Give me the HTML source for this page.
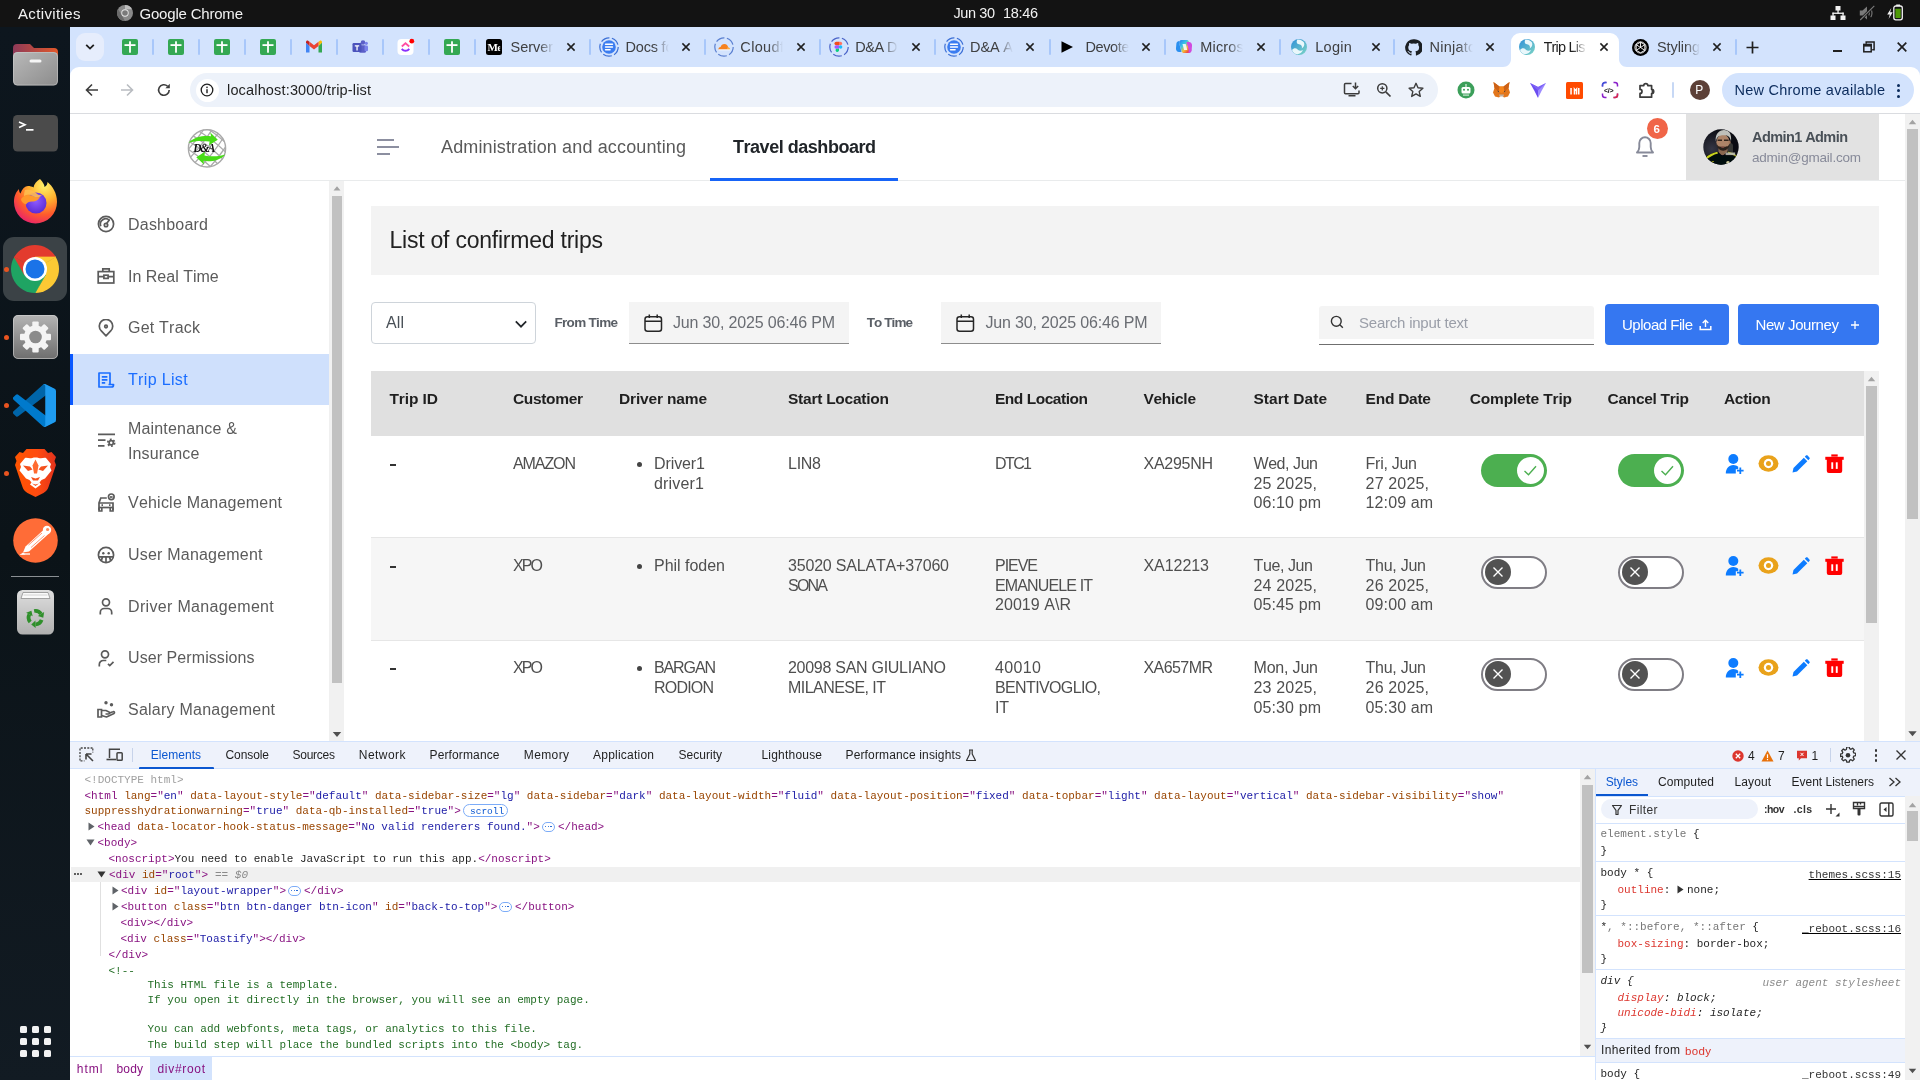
<!DOCTYPE html>
<html lang="en">
<head>
<meta charset="utf-8">
<title>Trip List</title>
<style>
html,body{margin:0;padding:0;}
body{width:1920px;height:1080px;overflow:hidden;position:relative;background:#fff;font-family:"Liberation Sans",sans-serif;font-kerning:none;-webkit-font-smoothing:antialiased;}
.b{position:absolute;display:block;}
.t{position:absolute;white-space:pre;line-height:1;display:block;}
.t span{white-space:pre;}
.u{text-decoration:underline;}
#w{position:absolute;left:0;top:0;width:1920px;height:1080px;will-change:transform;}
</style>
</head>
<body>
<div id="w">
<div class="b" style="left:0px;top:0px;width:1920px;height:27px;background:#131313;"></div>
<span class="t" style="left:18px;top:6px;font-size:15px;color:#f2f2f2;letter-spacing:0.369px;">Activities</span>
<svg class="b" style="left:117px;top:5px;" width="16" height="16" viewBox="0 0 16 16"><circle cx="8" cy="8" r="8" fill="#8a8a8a"/><path d="M8 0a8 8 0 0 1 7 4.2H8z" fill="#bdbdbd"/><path d="M1 4.1 4.6 10 8 16a8 8 0 0 1-7-11.9z" fill="#6a6a6a"/><circle cx="8" cy="8" r="3.7" fill="#e8e8e8"/><circle cx="8" cy="8" r="2.8" fill="#7a7a7a"/></svg>
<span class="t" style="left:139.5px;top:6px;font-size:15px;color:#f2f2f2;letter-spacing:-0.199px;">Google Chrome</span>
<span class="t" style="left:953.5px;top:6px;font-size:14.5px;color:#f2f2f2;letter-spacing:-0.407px;">Jun 30</span>
<span class="t" style="left:1003px;top:6px;font-size:14.5px;color:#f2f2f2;letter-spacing:-0.321px;">18:46</span>
<svg class="b" style="left:1830px;top:5px;" width="16" height="16" viewBox="0 0 16 16"><g fill="#f2f2f2"><rect x="5.5" y="1" width="5" height="4.5"/><rect x="0.5" y="10.5" width="5" height="4.5"/><rect x="10.5" y="10.5" width="5" height="4.5"/><rect x="7.4" y="5" width="1.3" height="3.5"/><rect x="2.4" y="7.6" width="11.3" height="1.3"/><rect x="2.4" y="7.6" width="1.3" height="3.2"/><rect x="12.4" y="7.6" width="1.3" height="3.2"/></g></svg>
<svg class="b" style="left:1859px;top:5px;" width="16" height="16" viewBox="0 0 16 16"><g fill="#7a7a7a"><path d="M.8 5.5h2.7L8 1.5v13L3.5 10.5H.8z"/><path d="M10 5.2c1.2.8 1.2 4.8 0 5.6l-.7-.8c.7-.7.7-3.3 0-4z"/><path d="M12 3.5c2 1.8 2 7.2 0 9l-.7-.7c1.5-1.7 1.5-5.9 0-7.6z"/></g><path d="M15.3 .8 1.2 15" stroke="#131313" stroke-width="2.6"/><path d="M15.3 .8 1.2 15" stroke="#7a7a7a" stroke-width="1.1"/></svg>
<svg class="b" style="left:1886px;top:4px;" width="18" height="18" viewBox="0 0 18 18"><path d="M5.3 4 1.2 10.6h2.6L2.6 15 6.7 8.3H4.1z" fill="#f2f2f2"/><rect x="7.8" y="2" width="8.5" height="13.8" rx="2" fill="none" stroke="#f2f2f2" stroke-width="1.3"/><rect x="10.2" y=".5" width="3.8" height="1.6" fill="#f2f2f2"/><rect x="9.4" y="4.8" width="5.3" height="9.2" rx=".5" fill="#4e9a06"/></svg>
<div class="b" style="left:0px;top:27px;width:70px;height:1053px;background:linear-gradient(180deg,#0d161e 0%,#0b1318 50%,#121b23 100%);"></div>
<svg class="b" style="left:13px;top:44px;" width="45" height="42" viewBox="0 0 45 42"><defs><linearGradient id="fg1" x1="0" x2="1"><stop offset="0" stop-color="#8e3a59"/><stop offset="1" stop-color="#e2582a"/></linearGradient><linearGradient id="fg2" x1="0" y1="0" x2="1" y2="1"><stop offset="0" stop-color="#b9b9b9"/><stop offset="1" stop-color="#8c8c8c"/></linearGradient></defs><path d="M0 4a4 4 0 0 1 4-4h13l4 4h20a4 4 0 0 1 4 4v20H0z" fill="url(#fg1)"/><rect x="0" y="8" width="45" height="33.5" rx="4.5" fill="url(#fg2)"/><rect x="0.5" y="8.5" width="44" height="32.5" rx="4" fill="none" stroke="#d0d0d0" stroke-width="0.7" opacity="0.7"/><rect x="16.5" y="15.5" width="12" height="3" rx="1.5" fill="#f5f5f5"/></svg>
<svg class="b" style="left:13px;top:115px;" width="45" height="37" viewBox="0 0 45 37"><rect width="45" height="36.5" rx="4.5" fill="#4b4b4b"/><path d="M6 7l6 2.7L6 12.4" fill="none" stroke="#fff" stroke-width="1.6"/><rect x="13" y="14" width="7.5" height="1.7" fill="#fff"/></svg>
<svg class="b" style="left:13px;top:178px;" width="45" height="46" viewBox="0 0 45 46"><defs><radialGradient id="ff1" cx="0.7" cy="0.15" r="1"><stop offset="0" stop-color="#fff36b"/><stop offset="0.35" stop-color="#ffb02e"/><stop offset="0.65" stop-color="#ff5b2c"/><stop offset="1" stop-color="#e3127e"/></radialGradient><radialGradient id="ff2" cx="0.5" cy="0.4" r="0.6"><stop offset="0" stop-color="#8f5bff"/><stop offset="1" stop-color="#5b2bd6"/></radialGradient></defs><path d="M27 1c3 3 4.5 6 4.5 8 2-1 3-3 3-5 5 4 9.5 11 9.5 20a21.5 21.5 0 0 1-43 0c0-6 2-10 5-13 0 2 .5 3.5 1.5 4.5C9 11 12 8 15 8c2 0 4 .5 5.5 1.5C21 6 23.5 3 27 1z" fill="url(#ff1)"/><circle cx="23" cy="25" r="10.5" fill="url(#ff2)"/><path d="M8 21c3-4 8-5 12-3 3 1.5 5 1.5 7 .5-1 3-4 5-8 5-3 0-5 1-6 3-3-1-5-3-5-5.5z" fill="#ff9a2b"/><path d="M12 12c4-1 8 0 11 3 2 2 4 2.5 6 2-2 2.5-6 3-9 1-3-2-6-2-9 0 0-2.5.5-4.5 1-6z" fill="#ffbd4f" opacity="0.9"/></svg>
<div class="b" style="left:3px;top:237px;width:64px;height:64px;background:#3b4246;border-radius:11px;"></div>
<svg class="b" style="left:11px;top:245px;" width="48" height="48" viewBox="0 0 48 48"><path d="M24 24 3.22 12A24 24 0 0 1 44.78 12z" fill="#e33b2e"/><path d="M24 24 44.78 12A24 24 0 0 1 24 48z" fill="#fcc934"/><path d="M24 24 24 48A24 24 0 0 1 3.22 12z" fill="#1fa463"/><path d="M24 24 44.78 12H24z" fill="#fcc934" stroke="#fcc934" stroke-width=".7"/><path d="M24 24 24 48 34.39 30z" fill="#1fa463" stroke="#1fa463" stroke-width=".7"/><path d="M24 24 3.22 12 13.61 30z" fill="#e33b2e" stroke="#e33b2e" stroke-width=".7"/><circle cx="24" cy="24" r="12" fill="#fff"/><circle cx="24" cy="24" r="9.5" fill="#1a73e8"/></svg>
<svg class="b" style="left:13px;top:315px;" width="45" height="45" viewBox="0 0 45 45"><defs><linearGradient id="sg" x1="0" y1="0" x2="0" y2="1"><stop offset="0" stop-color="#b4b4b4"/><stop offset="1" stop-color="#6e6e6e"/></linearGradient></defs><rect width="45" height="44" rx="5" fill="url(#sg)"/><rect x="0.5" y="0.5" width="44" height="43" rx="4.5" fill="none" stroke="#d8d8d8" stroke-width="0.8" opacity="0.7"/><g transform="translate(22.5 22)"><g fill="#f4f4f4"><rect x="-3.2" y="-15.5" width="6.4" height="8" rx="1" transform="rotate(0)"/><rect x="-3.2" y="-15.5" width="6.4" height="8" rx="1" transform="rotate(45)"/><rect x="-3.2" y="-15.5" width="6.4" height="8" rx="1" transform="rotate(90)"/><rect x="-3.2" y="-15.5" width="6.4" height="8" rx="1" transform="rotate(135)"/><rect x="-3.2" y="-15.5" width="6.4" height="8" rx="1" transform="rotate(180)"/><rect x="-3.2" y="-15.5" width="6.4" height="8" rx="1" transform="rotate(225)"/><rect x="-3.2" y="-15.5" width="6.4" height="8" rx="1" transform="rotate(270)"/><rect x="-3.2" y="-15.5" width="6.4" height="8" rx="1" transform="rotate(315)"/></g><circle r="11.5" fill="#f4f4f4"/><circle r="6.3" fill="#8b8b8b"/></g></svg>
<svg class="b" style="left:13px;top:384px;" width="43" height="43" viewBox="0 0 100 100"><path d="M96.46 10.8 75.86.88a6.23 6.23 0 0 0-7.1 1.2L1.3 63.6a4.17 4.17 0 0 0 0 6.16l5.5 5a4.17 4.17 0 0 0 5.33.24L93.4 13.4c2.72-2.07 6.64-.13 6.64 3.3v-.24a6.25 6.25 0 0 0-3.54-5.63z" fill="#0065a9"/><path d="M96.46 89.2 75.86 99.12a6.23 6.23 0 0 1-7.1-1.2L1.3 36.4a4.17 4.17 0 0 1 0-6.16l5.5-5a4.17 4.17 0 0 1 5.33-.24L93.4 86.6c2.72 2.07 6.64.13 6.64-3.3v.24a6.25 6.25 0 0 1-3.54 5.63z" fill="#007acc"/><path d="M75.86 99.13a6.23 6.23 0 0 1-7.1-1.21c2.3 2.3 6.25.67 6.25-2.59V4.67c0-3.26-3.94-4.89-6.25-2.59a6.23 6.23 0 0 1 7.1-1.21l20.6 9.9A6.25 6.25 0 0 1 100 16.4v67.2a6.25 6.25 0 0 1-3.54 5.63z" fill="#1f9cf0"/></svg>
<svg class="b" style="left:14px;top:449px;" width="43" height="48" viewBox="0 0 43 48"><defs><linearGradient id="bg" x1="0" x2="1"><stop offset="0" stop-color="#ff5500"/><stop offset="0.55" stop-color="#ff4b10"/><stop offset="1" stop-color="#e2321c"/></linearGradient></defs><path d="M30.5 0h-18L9 4 5.5 3 1 8l1.5 4L1 16l7.5 22c1 3 2.5 4.5 5 6l8 4 8-4c2.5-1.5 4-3 5-6L42 16l-1.5-4L42 8l-4.5-5L34 4z" fill="url(#bg)"/><path d="M21.5 8.5c2.5 0 4 .8 5.5.8s3.5-1 5-.3l5 6-1 3 1.5 3.5-6.5 8-3.5 1.5-2 2.5 1.5 2-5.5 4-5.5-4 1.5-2-2-2.5-3.5-1.5-6.5-8 1.5-3.5-1-3 5-6c1.5-.7 3.5.3 5 .3s3-.8 5.5-.8z" fill="#fff"/><path d="M9 16.5l7 1 2.5 3-4.5 1.5zM34 16.5l-7 1-2.5 3 4.5 1.5z" fill="#f4511e"/><path d="M21.5 10.5l3 6-1.5 8h-3l-1.5-8z" fill="#ff5a1a" opacity="0.9"/><path d="M17 28l4.5 1.5L26 28l-2 3.5h-5z" fill="#f4511e"/><path d="M18 34.5l3.5 1 3.5-1-3.5 2.5z" fill="#f4511e"/></svg>
<svg class="b" style="left:13px;top:518px;" width="45" height="45" viewBox="0 0 45 45"><circle cx="22.5" cy="22.5" r="22.3" fill="#ff6c37"/><path d="M31 11.5 12.5 28.5 10 34.5l6-1L36 15.5z" fill="#fff"/><circle cx="34" cy="12" r="4.2" fill="#fff"/><circle cx="34.6" cy="11.5" r="1.6" fill="#ff8a5c"/><path d="M10 34.5 6.5 37l6-.5z" fill="#fff"/><path d="M9 36h8" stroke="#fff" stroke-width="1.3"/><path d="M15.5 27 29 15M18 29.5 31.5 17.5M21 31l12-11" stroke="#ff6c37" stroke-width="0.7" fill="none"/></svg>
<div class="b" style="left:4px;top:266.5px;width:5px;height:5px;background:#e95420;border-radius:50%;"></div>
<div class="b" style="left:4px;top:334.5px;width:5px;height:5px;background:#e95420;border-radius:50%;"></div>
<div class="b" style="left:4px;top:402.5px;width:5px;height:5px;background:#e95420;border-radius:50%;"></div>
<div class="b" style="left:4px;top:470.5px;width:5px;height:5px;background:#e95420;border-radius:50%;"></div>
<div class="b" style="left:11px;top:576px;width:48px;height:1px;background:#8a8f93;"></div>
<svg class="b" style="left:17px;top:589px;" width="37" height="46" viewBox="0 0 37 46"><defs><linearGradient id="tg" x1="0" y1="0" x2="0" y2="1"><stop offset="0" stop-color="#dedede"/><stop offset="1" stop-color="#b0b0b0"/></linearGradient></defs><rect x="0" y="1" width="37" height="44.5" rx="5.5" fill="url(#tg)"/><path d="M4 9.5 6 3.5h25l2 6z" fill="#fafafa" stroke="#8f8f8f" stroke-width="0.8"/><path d="M6.5 6h24" stroke="#c9c9c9" stroke-width="0.8"/><g transform="translate(18.3 28.6)"><path d="M-1.16 -6.6A6.7 6.7 0 0 1 5.68 -3.55" fill="none" stroke="#2f8f2b" stroke-width="3.8"/><path d="M8.82 -5.51L2.54 -1.59L7.96 0.1z" fill="#2f8f2b"/><path d="M6.3 2.29A6.7 6.7 0 0 1 0.23 6.7" fill="none" stroke="#2f8f2b" stroke-width="3.8"/><path d="M0.36 10.39L0.1 3L-4.06 6.85z" fill="#2f8f2b"/><path d="M-5.13 4.31A6.7 6.7 0 0 1 -5.92 -3.15" fill="none" stroke="#2f8f2b" stroke-width="3.8"/><path d="M-9.18 -4.88L-2.65 -1.41L-3.9 -6.94z" fill="#2f8f2b"/></g></svg>
<div class="b" style="left:20px;top:1026px;width:6.5px;height:6.5px;background:#f2f2f2;border-radius:1.5px;"></div>
<div class="b" style="left:32px;top:1026px;width:6.5px;height:6.5px;background:#f2f2f2;border-radius:1.5px;"></div>
<div class="b" style="left:44px;top:1026px;width:6.5px;height:6.5px;background:#f2f2f2;border-radius:1.5px;"></div>
<div class="b" style="left:20px;top:1038px;width:6.5px;height:6.5px;background:#f2f2f2;border-radius:1.5px;"></div>
<div class="b" style="left:32px;top:1038px;width:6.5px;height:6.5px;background:#f2f2f2;border-radius:1.5px;"></div>
<div class="b" style="left:44px;top:1038px;width:6.5px;height:6.5px;background:#f2f2f2;border-radius:1.5px;"></div>
<div class="b" style="left:20px;top:1050px;width:6.5px;height:6.5px;background:#f2f2f2;border-radius:1.5px;"></div>
<div class="b" style="left:32px;top:1050px;width:6.5px;height:6.5px;background:#f2f2f2;border-radius:1.5px;"></div>
<div class="b" style="left:44px;top:1050px;width:6.5px;height:6.5px;background:#f2f2f2;border-radius:1.5px;"></div>
<div class="b" style="left:70px;top:27px;width:1850px;height:52px;background:#d3e3fd;"></div>
<div class="b" style="left:76px;top:33px;width:28px;height:28px;background:#e6edfc;border-radius:9px;"></div>
<svg class="b" style="left:83px;top:41px;" width="14" height="12" viewBox="0 0 14 12"><path d="M3.2 3.8 7 7.6l3.8-3.8" fill="none" stroke="#1f1f1f" stroke-width="1.8"/></svg>
<svg class="b" style="left:122px;top:39px;" width="16" height="16" viewBox="0 0 16 16"><rect width="16" height="16" rx="2" fill="#34a853"/><rect x="2.5" y="5.2" width="11" height="1.8" fill="#fff"/><rect x="7.1" y="2.3" width="1.8" height="11.4" fill="#fff"/></svg>
<svg class="b" style="left:168px;top:39px;" width="16" height="16" viewBox="0 0 16 16"><rect width="16" height="16" rx="2" fill="#34a853"/><rect x="2.5" y="5.2" width="11" height="1.8" fill="#fff"/><rect x="7.1" y="2.3" width="1.8" height="11.4" fill="#fff"/></svg>
<svg class="b" style="left:214px;top:39px;" width="16" height="16" viewBox="0 0 16 16"><rect width="16" height="16" rx="2" fill="#34a853"/><rect x="2.5" y="5.2" width="11" height="1.8" fill="#fff"/><rect x="7.1" y="2.3" width="1.8" height="11.4" fill="#fff"/></svg>
<svg class="b" style="left:260px;top:39px;" width="16" height="16" viewBox="0 0 16 16"><rect width="16" height="16" rx="2" fill="#34a853"/><rect x="2.5" y="5.2" width="11" height="1.8" fill="#fff"/><rect x="7.1" y="2.3" width="1.8" height="11.4" fill="#fff"/></svg>
<svg class="b" style="left:306px;top:40px;" width="16" height="14" viewBox="0 0 16 14"><path d="M0 2.5v10h3.5V6z" fill="#4285f4"/><path d="M16 2.5v10h-3.5V6z" fill="#34a853"/><path d="M0 2.5 3.5 6V1.8L2.4.9C1.4.2 0 .9 0 2.1z" fill="#c5221f"/><path d="M16 2.5 12.5 6V1.8l1.1-.9c1-.7 2.4 0 2.4 1.2z" fill="#fbbc04"/><path d="M3.5 6V1.8L8 5.2l4.5-3.4V6L8 9.4z" fill="#ea4335"/></svg>
<svg class="b" style="left:352px;top:39px;" width="16" height="16" viewBox="0 0 16 16"><circle cx="11" cy="3.5" r="2.3" fill="#5b5fc7"/><circle cx="14.3" cy="4.3" r="1.6" fill="#7b83eb"/><rect x="7" y="6.2" width="7" height="7.5" rx="1.5" fill="#5b5fc7"/><rect x="12.5" y="6.5" width="3.5" height="5.8" rx="1.2" fill="#7b83eb"/><rect x="0.5" y="4" width="9" height="9" rx="1.2" fill="#4b53bc"/><path d="M2.8 6.3h4.4v1.2H5.7v4H4.4v-4H2.8z" fill="#fff"/></svg>
<svg class="b" style="left:397px;top:38px;" width="18" height="18" viewBox="0 0 18 18"><rect x="0.5" y="1" width="16" height="16" rx="4" fill="#fff"/><path d="M4 11.5c2.6 3 6.4 3 9 0l-1.5-1.3c-1.8 2-4.2 2-6 0z" fill="#8930fd"/><path d="M8.5 4 4.2 7.8l1.2 1.4L8.5 6.5l3.1 2.7 1.2-1.4z" fill="#ff4fa3"/><circle cx="14.8" cy="3.2" r="2.4" fill="#ff0000"/></svg>
<svg class="b" style="left:444px;top:39px;" width="16" height="16" viewBox="0 0 16 16"><rect width="16" height="16" rx="2" fill="#34a853"/><rect x="2.5" y="5.2" width="11" height="1.8" fill="#fff"/><rect x="7.1" y="2.3" width="1.8" height="11.4" fill="#fff"/></svg>
<div class="b" style="left:152px;top:39px;width:2px;height:16px;background:#a8c7fa;border-radius:1px;"></div>
<div class="b" style="left:198px;top:39px;width:2px;height:16px;background:#a8c7fa;border-radius:1px;"></div>
<div class="b" style="left:244px;top:39px;width:2px;height:16px;background:#a8c7fa;border-radius:1px;"></div>
<div class="b" style="left:290px;top:39px;width:2px;height:16px;background:#a8c7fa;border-radius:1px;"></div>
<div class="b" style="left:336px;top:39px;width:2px;height:16px;background:#a8c7fa;border-radius:1px;"></div>
<div class="b" style="left:382px;top:39px;width:2px;height:16px;background:#a8c7fa;border-radius:1px;"></div>
<div class="b" style="left:428px;top:39px;width:2px;height:16px;background:#a8c7fa;border-radius:1px;"></div>
<div class="b" style="left:474px;top:39px;width:2px;height:16px;background:#a8c7fa;border-radius:1px;"></div>
<svg class="b" style="left:1503px;top:33px;" width="124" height="34" viewBox="0 0 124 34"><path d="M0 34c4.5 0 8-3.5 8-8V9a9 9 0 0 1 9-9h90a9 9 0 0 1 9 9v17c0 4.5 3.5 8 8 8z" fill="#fff"/></svg>
<svg class="b" style="left:486px;top:39px;" width="16" height="16" viewBox="0 0 16 16"><rect width="16" height="16" rx="2.5" fill="#000"/></svg>
<span class="t" style="left:487.5px;top:42px;font-size:11px;color:#fff;font-family:'Liberation Serif',serif;font-weight:700;">M</span>
<span class="t" style="left:497.3px;top:42px;font-size:11px;color:#fff;font-family:'Liberation Serif',serif;font-weight:700;clip-path:inset(0 2px 0 0);">e</span>
<div class="b" style="left:510.5px;top:37px;width:44px;height:20px;overflow:hidden;-webkit-mask-image:linear-gradient(90deg,#000 0,#000 28px,transparent 43px);mask-image:linear-gradient(90deg,#000 0,#000 28px,transparent 43px);"><span class="t" style="left:0px;top:3px;font-size:14.5px;color:#3f4042;letter-spacing:-0.041px;">Server</span>
</div>
<svg class="b" style="left:564.8px;top:41px;" width="12" height="12" viewBox="0 0 12 12"><path d="M2.4 2.4 9.6 9.6M9.6 2.4 2.4 9.6" stroke="#1f1f1f" stroke-width="1.5" fill="none"/></svg>
<svg class="b" style="left:599px;top:37px;" width="20" height="20" viewBox="0 0 20 20"><circle cx="10" cy="10" r="9.2" fill="none" stroke="#3b6fd6" stroke-width="1.2" stroke-dasharray="9 2.5"/><circle cx="10" cy="10" r="6.8" fill="#3b7cf0"/><g fill="#fff"><rect x="5.8" y="6.5" width="8.4" height="1.4" rx=".7"/><rect x="5.8" y="9.3" width="8.4" height="1.4" rx=".7"/><rect x="5.8" y="12.1" width="6" height="1.4" rx=".7"/></g></svg>
<div class="b" style="left:625.5px;top:37px;width:44px;height:20px;overflow:hidden;-webkit-mask-image:linear-gradient(90deg,#000 0,#000 28px,transparent 43px);mask-image:linear-gradient(90deg,#000 0,#000 28px,transparent 43px);"><span class="t" style="left:0px;top:3px;font-size:14.5px;color:#3f4042;letter-spacing:-0.193px;">Docs fo</span>
</div>
<svg class="b" style="left:679.8px;top:41px;" width="12" height="12" viewBox="0 0 12 12"><path d="M2.4 2.4 9.6 9.6M9.6 2.4 2.4 9.6" stroke="#1f1f1f" stroke-width="1.5" fill="none"/></svg>
<svg class="b" style="left:713.8px;top:37px;" width="20" height="20" viewBox="0 0 20 20"><circle cx="10" cy="10" r="9.2" fill="none" stroke="#5a7fd0" stroke-width="1.2" stroke-dasharray="9 2.5"/><path d="M4.5 12.8c-.3-1.6.8-2.7 2.1-2.7.5-1.9 2-3 3.8-3 2.1 0 3.6 1.6 3.8 3.6 1 .1 1.7 1 1.5 2.1z" fill="#f6821f"/><path d="M13.5 10.3c1.6-.2 2.7.9 2.5 2.5h-3.3z" fill="#fbad41"/><rect x="4.5" y="12.4" width="11.5" height=".9" fill="#fff"/></svg>
<div class="b" style="left:740.3px;top:37px;width:44px;height:20px;overflow:hidden;-webkit-mask-image:linear-gradient(90deg,#000 0,#000 28px,transparent 43px);mask-image:linear-gradient(90deg,#000 0,#000 28px,transparent 43px);"><span class="t" style="left:0px;top:3px;font-size:14.5px;color:#3f4042;letter-spacing:0.357px;">Cloudf</span>
</div>
<svg class="b" style="left:794.5999999999999px;top:41px;" width="12" height="12" viewBox="0 0 12 12"><path d="M2.4 2.4 9.6 9.6M9.6 2.4 2.4 9.6" stroke="#1f1f1f" stroke-width="1.5" fill="none"/></svg>
<svg class="b" style="left:828.8px;top:37px;" width="20" height="20" viewBox="0 0 20 20"><circle cx="10" cy="10" r="9.2" fill="none" stroke="#4a63c8" stroke-width="1.2" stroke-dasharray="9 2.5"/><path d="M7.2 4.8h2.8v3.5H7.2a1.75 1.75 0 0 1 0-3.5z" fill="#f24e1e"/><path d="M10 4.8h1.4a1.75 1.75 0 0 1 0 3.5H10z" fill="#ff7262"/><path d="M7.2 8.3h2.8v3.5H7.2a1.75 1.75 0 0 1 0-3.5z" fill="#a259ff"/><circle cx="11.6" cy="10.05" r="1.75" fill="#1abcfe"/><path d="M7.2 11.8h2.8v1.8a1.75 1.75 0 1 1-2.8-1.8z" fill="#0acf83"/></svg>
<div class="b" style="left:855.3px;top:37px;width:44px;height:20px;overflow:hidden;-webkit-mask-image:linear-gradient(90deg,#000 0,#000 28px,transparent 43px);mask-image:linear-gradient(90deg,#000 0,#000 28px,transparent 43px);"><span class="t" style="left:0px;top:3px;font-size:14.5px;color:#3f4042;letter-spacing:-0.529px;">D&amp;A D</span>
</div>
<svg class="b" style="left:909.5999999999999px;top:41px;" width="12" height="12" viewBox="0 0 12 12"><path d="M2.4 2.4 9.6 9.6M9.6 2.4 2.4 9.6" stroke="#1f1f1f" stroke-width="1.5" fill="none"/></svg>
<svg class="b" style="left:943.6px;top:37px;" width="20" height="20" viewBox="0 0 20 20"><circle cx="10" cy="10" r="9.2" fill="none" stroke="#3b6fd6" stroke-width="1.2" stroke-dasharray="9 2.5"/><circle cx="10" cy="10" r="6.8" fill="#3b7cf0"/><g fill="#fff"><rect x="5.8" y="6.5" width="8.4" height="1.4" rx=".7"/><rect x="5.8" y="9.3" width="8.4" height="1.4" rx=".7"/><rect x="5.8" y="12.1" width="6" height="1.4" rx=".7"/></g></svg>
<div class="b" style="left:970.1px;top:37px;width:44px;height:20px;overflow:hidden;-webkit-mask-image:linear-gradient(90deg,#000 0,#000 28px,transparent 43px);mask-image:linear-gradient(90deg,#000 0,#000 28px,transparent 43px);"><span class="t" style="left:0px;top:3px;font-size:14.5px;color:#3f4042;letter-spacing:-0.154px;">D&amp;A A</span>
</div>
<svg class="b" style="left:1024.4px;top:41px;" width="12" height="12" viewBox="0 0 12 12"><path d="M2.4 2.4 9.6 9.6M9.6 2.4 2.4 9.6" stroke="#1f1f1f" stroke-width="1.5" fill="none"/></svg>
<svg class="b" style="left:1057.5px;top:39px;" width="16" height="16" viewBox="0 0 16 16"><path d="M3.5 2.3 15 8 3.5 13.7z" fill="#000"/></svg>
<div class="b" style="left:1085.5px;top:37px;width:44px;height:20px;overflow:hidden;-webkit-mask-image:linear-gradient(90deg,#000 0,#000 28px,transparent 43px);mask-image:linear-gradient(90deg,#000 0,#000 28px,transparent 43px);"><span class="t" style="left:0px;top:3px;font-size:14.5px;color:#3f4042;letter-spacing:-0.389px;">Devote</span>
</div>
<svg class="b" style="left:1139.8px;top:41px;" width="12" height="12" viewBox="0 0 12 12"><path d="M2.4 2.4 9.6 9.6M9.6 2.4 2.4 9.6" stroke="#1f1f1f" stroke-width="1.5" fill="none"/></svg>
<svg class="b" style="left:1175.8px;top:39px;" width="16" height="16" viewBox="0 0 16 16"><defs><linearGradient id="cp1" x1="0" y1="0" x2="1" y2="1"><stop offset="0" stop-color="#2a7bf0"/><stop offset="0.35" stop-color="#37c6e8"/><stop offset="0.6" stop-color="#f5c13a"/><stop offset="0.8" stop-color="#f0543a"/><stop offset="1" stop-color="#c23bd8"/></linearGradient></defs><path d="M5.5 1h5.2c1 0 1.8.6 2.1 1.5l2.4 8c.5 1.7-.7 3.5-2.5 3.5H7.8c-1 0-1.8-.6-2.1-1.5L3.3 4.5C2.8 2.8 3.8 1 5.5 1z" fill="url(#cp1)"/><path d="M3.3 2c-1.5 0-2.7 1.1-2.9 2.5L0 9c-.3 2 1 4 3 4h2.5L3.3 4.5z" fill="#2a8ff0"/><path d="M12.7 14c1.5 0 2.7-1.1 2.9-2.5L16 7c.3-2-1-4-3-4h-2.5l2.2 7.5z" fill="#d14adf"/><path d="M6.5 5h3.2l1.6 6H8.1z" fill="#fff" opacity="0.85"/></svg>
<div class="b" style="left:1200.3px;top:37px;width:44px;height:20px;overflow:hidden;-webkit-mask-image:linear-gradient(90deg,#000 0,#000 28px,transparent 43px);mask-image:linear-gradient(90deg,#000 0,#000 28px,transparent 43px);"><span class="t" style="left:0px;top:3px;font-size:14.5px;color:#3f4042;letter-spacing:0.161px;">Micros</span>
</div>
<svg class="b" style="left:1254.6px;top:41px;" width="12" height="12" viewBox="0 0 12 12"><path d="M2.4 2.4 9.6 9.6M9.6 2.4 2.4 9.6" stroke="#1f1f1f" stroke-width="1.5" fill="none"/></svg>
<svg class="b" style="left:1290.8px;top:39px;" width="16" height="16" viewBox="0 0 16 16"><defs><linearGradient id="tr1298" x1="0" y1="0" x2="1" y2="1"><stop offset="0" stop-color="#2f8fd8"/><stop offset="1" stop-color="#7ed6c5"/></linearGradient></defs><circle cx="8" cy="8" r="8" fill="url(#tr1298)"/><path d="M6.5 0.4c-1.5 2.2-.8 4.3 1.5 4.8 2.5.5 3.5 2.2 2.8 4.2 2-1 3.2-3.2 2.2-5.8-1-2-3.7-3.4-6.5-3.2z" fill="#e9f7fb"/><path d="M1 11c1.6-2 4-2.2 5.6-.6 1.5 1.5 3.3 1.7 5.4.7-1.3 3-4 4.6-7 3.9-2-.6-3.4-2.1-4-4z" fill="#e9f7fb"/></svg>
<span class="t" style="left:1315.3px;top:40px;font-size:14.5px;color:#3f4042;letter-spacing:0.255px;">Login</span>
<svg class="b" style="left:1369.6px;top:41px;" width="12" height="12" viewBox="0 0 12 12"><path d="M2.4 2.4 9.6 9.6M9.6 2.4 2.4 9.6" stroke="#1f1f1f" stroke-width="1.5" fill="none"/></svg>
<svg class="b" style="left:1404.5px;top:38.5px;" width="17" height="17" viewBox="0 0 17 17"><path d="M8.5.3a8.3 8.3 0 0 0-2.6 16.2c.4.1.6-.2.6-.4v-1.5c-2.3.5-2.8-1-2.8-1-.4-1-.9-1.2-.9-1.2-.8-.5.1-.5.1-.5.8.1 1.3.9 1.3.9.7 1.3 2 .9 2.4.7.1-.5.3-.9.5-1.1-1.8-.2-3.8-.9-3.8-4.1 0-.9.3-1.6.9-2.2-.1-.2-.4-1 .1-2.2 0 0 .7-.2 2.3.9a8 8 0 0 1 4.2 0c1.6-1.1 2.3-.9 2.3-.9.5 1.2.2 2 .1 2.2.5.6.9 1.3.9 2.2 0 3.2-2 3.9-3.8 4.1.3.3.6.8.6 1.5v2.3c0 .2.1.5.6.4A8.3 8.3 0 0 0 8.5.3z" fill="#1b1f23"/></svg>
<div class="b" style="left:1429.5px;top:37px;width:44px;height:20px;overflow:hidden;-webkit-mask-image:linear-gradient(90deg,#000 0,#000 28px,transparent 43px);mask-image:linear-gradient(90deg,#000 0,#000 28px,transparent 43px);"><span class="t" style="left:0px;top:3px;font-size:14.5px;color:#3f4042;letter-spacing:0.227px;">Ninjato</span>
</div>
<svg class="b" style="left:1483.8px;top:41px;" width="12" height="12" viewBox="0 0 12 12"><path d="M2.4 2.4 9.6 9.6M9.6 2.4 2.4 9.6" stroke="#1f1f1f" stroke-width="1.5" fill="none"/></svg>
<svg class="b" style="left:1519px;top:39px;" width="16" height="16" viewBox="0 0 16 16"><defs><linearGradient id="tr1527" x1="0" y1="0" x2="1" y2="1"><stop offset="0" stop-color="#2f8fd8"/><stop offset="1" stop-color="#7ed6c5"/></linearGradient></defs><circle cx="8" cy="8" r="8" fill="url(#tr1527)"/><path d="M6.5 0.4c-1.5 2.2-.8 4.3 1.5 4.8 2.5.5 3.5 2.2 2.8 4.2 2-1 3.2-3.2 2.2-5.8-1-2-3.7-3.4-6.5-3.2z" fill="#e9f7fb"/><path d="M1 11c1.6-2 4-2.2 5.6-.6 1.5 1.5 3.3 1.7 5.4.7-1.3 3-4 4.6-7 3.9-2-.6-3.4-2.1-4-4z" fill="#e9f7fb"/></svg>
<div class="b" style="left:1543.5px;top:37px;width:44px;height:20px;overflow:hidden;-webkit-mask-image:linear-gradient(90deg,#000 0,#000 28px,transparent 43px);mask-image:linear-gradient(90deg,#000 0,#000 28px,transparent 43px);"><span class="t" style="left:0px;top:3px;font-size:14.5px;color:#1f1f1f;letter-spacing:-0.791px;">Trip Lis</span>
</div>
<svg class="b" style="left:1597.8px;top:41px;" width="12" height="12" viewBox="0 0 12 12"><path d="M2.4 2.4 9.6 9.6M9.6 2.4 2.4 9.6" stroke="#1f1f1f" stroke-width="1.5" fill="none"/></svg>
<svg class="b" style="left:1632px;top:38.5px;" width="17" height="17" viewBox="0 0 17 17"><circle cx="8.5" cy="8.5" r="8.5" fill="#000"/><g fill="none" stroke="#fff" stroke-width="0.9"><path d="M8.5 3.2 12.8 5.7v5.6L8.5 13.8 4.2 11.3V5.7z"/><path d="M8.5 3.2v5.3l4.3 2.8M8.5 8.5 4.2 11.3M4.2 5.7l4.3 2.8 4.3-2.8"/><circle cx="8.5" cy="8.5" r="5.6"/></g></svg>
<div class="b" style="left:1657px;top:37px;width:44px;height:20px;overflow:hidden;-webkit-mask-image:linear-gradient(90deg,#000 0,#000 28px,transparent 43px);mask-image:linear-gradient(90deg,#000 0,#000 28px,transparent 43px);"><span class="t" style="left:0px;top:3px;font-size:14.5px;color:#3f4042;letter-spacing:-0.087px;">Styling</span>
</div>
<svg class="b" style="left:1711.3px;top:41px;" width="12" height="12" viewBox="0 0 12 12"><path d="M2.4 2.4 9.6 9.6M9.6 2.4 2.4 9.6" stroke="#1f1f1f" stroke-width="1.5" fill="none"/></svg>
<div class="b" style="left:589px;top:39px;width:2px;height:16px;background:#a8c7fa;border-radius:1px;"></div>
<div class="b" style="left:704px;top:39px;width:2px;height:16px;background:#a8c7fa;border-radius:1px;"></div>
<div class="b" style="left:818.5px;top:39px;width:2px;height:16px;background:#a8c7fa;border-radius:1px;"></div>
<div class="b" style="left:933.5px;top:39px;width:2px;height:16px;background:#a8c7fa;border-radius:1px;"></div>
<div class="b" style="left:1049px;top:39px;width:2px;height:16px;background:#a8c7fa;border-radius:1px;"></div>
<div class="b" style="left:1164px;top:39px;width:2px;height:16px;background:#a8c7fa;border-radius:1px;"></div>
<div class="b" style="left:1279px;top:39px;width:2px;height:16px;background:#a8c7fa;border-radius:1px;"></div>
<div class="b" style="left:1392.8px;top:39px;width:2px;height:16px;background:#a8c7fa;border-radius:1px;"></div>
<div class="b" style="left:1735px;top:39px;width:2px;height:16px;background:#a8c7fa;border-radius:1px;"></div>
<svg class="b" style="left:1745px;top:40px;" width="15" height="15" viewBox="0 0 15 15"><path d="M7.5 1.5v12M1.5 7.5h12" stroke="#1f1f1f" stroke-width="1.7"/></svg>
<div class="b" style="left:1832.5px;top:50px;width:9.5px;height:1.6px;background:#1f1f1f;"></div>
<svg class="b" style="left:1863px;top:41px;" width="12" height="12" viewBox="0 0 12 12"><path d="M3.2 2.8V.9h7.9v7.9H9.2" fill="none" stroke="#1f1f1f" stroke-width="1.5"/><rect x=".8" y="3.4" width="7.4" height="7.4" fill="none" stroke="#1f1f1f" stroke-width="1.5"/><rect x=".8" y="3.4" width="7.4" height="2.2" fill="#1f1f1f"/></svg>
<svg class="b" style="left:1895.5px;top:41px;" width="12" height="12" viewBox="0 0 12 12"><path d="M1.7000000000000002 1.7000000000000002 10.3 10.3M10.3 1.7000000000000002 1.7000000000000002 10.3" stroke="#1f1f1f" stroke-width="1.7" fill="none"/></svg>
<div class="b" style="left:70px;top:67px;width:1850px;height:46px;background:#fff;border-radius:9px 9px 0 0;"></div>
<div class="b" style="left:70px;top:113px;width:1850px;height:1px;background:#dadce0;"></div>
<svg class="b" style="left:84px;top:82px;" width="16" height="16" viewBox="0 0 16 16"><path d="M14 8H2.8M8 2.5 2.5 8 8 13.5" fill="none" stroke="#3c3c3c" stroke-width="1.6"/></svg>
<svg class="b" style="left:119px;top:82px;" width="16" height="16" viewBox="0 0 16 16"><path d="M2 8h11.2M8 2.5 13.5 8 8 13.5" fill="none" stroke="#b9bcc1" stroke-width="1.6"/></svg>
<svg class="b" style="left:156px;top:82px;" width="16" height="16" viewBox="0 0 16 16"><path d="M13.2 8a5.3 5.3 0 1 1-1.6-3.8" fill="none" stroke="#3c3c3c" stroke-width="1.6"/><path d="M13.8 1.8v4.4H9.4z" fill="#3c3c3c"/></svg>
<div class="b" style="left:190px;top:73px;width:1248px;height:34px;background:#edf2fa;border-radius:17px;"></div>
<div class="b" style="left:195.5px;top:78.5px;width:23px;height:23px;background:#fff;border-radius:50%;"></div>
<svg class="b" style="left:200px;top:83px;" width="14" height="14" viewBox="0 0 14 14"><circle cx="7" cy="7" r="5.8" fill="none" stroke="#1f1f1f" stroke-width="1.3"/><rect x="6.3" y="6.2" width="1.4" height="4" fill="#1f1f1f"/><rect x="6.3" y="3.6" width="1.4" height="1.5" fill="#1f1f1f"/></svg>
<span class="t" style="left:227px;top:83px;font-size:14.5px;color:#1f1f1f;letter-spacing:0.164px;">localhost:3000/trip-list</span>
<svg class="b" style="left:1343px;top:81px;" width="18" height="18" viewBox="0 0 18 18"><path d="M8.5 2.5H2.5a1 1 0 0 0-1 1v8.3a1 1 0 0 0 1 1h12.5a1 1 0 0 0 1-1V9.5" fill="none" stroke="#3c3c3c" stroke-width="1.5"/><rect x="5.5" y="14" width="7" height="1.5" fill="#3c3c3c"/><path d="M12.5 1.5v6M9.8 5l2.7 2.7L15.2 5" fill="none" stroke="#3c3c3c" stroke-width="1.5"/></svg>
<svg class="b" style="left:1376px;top:82px;" width="16" height="16" viewBox="0 0 16 16"><circle cx="6.3" cy="6.3" r="4.6" fill="none" stroke="#3c3c3c" stroke-width="1.5"/><path d="M9.8 9.8 14.5 14.5" stroke="#3c3c3c" stroke-width="1.7"/><path d="M6.3 4.2v4.2M4.2 6.3h4.2" stroke="#3c3c3c" stroke-width="1.2"/></svg>
<svg class="b" style="left:1407px;top:81px;" width="18" height="18" viewBox="0 0 18 18"><path d="M9 2.3l2 4.5 4.9.5-3.7 3.3 1.1 4.8L9 12.9l-4.3 2.5 1.1-4.8L2.1 7.3l4.9-.5z" fill="none" stroke="#3c3c3c" stroke-width="1.4" stroke-linejoin="round"/></svg>
<svg class="b" style="left:1457px;top:81px;" width="18" height="18" viewBox="0 0 18 18"><circle cx="9" cy="9" r="8.5" fill="#3c9f5a"/><rect x="4.5" y="6" width="9" height="6.5" rx="1.5" fill="#fff"/><circle cx="7" cy="8.8" r="1" fill="#3c9f5a"/><circle cx="11" cy="8.8" r="1" fill="#3c9f5a"/><rect x="8.5" y="3" width="1" height="3" fill="#fff"/><rect x="6" y="13.5" width="6" height="1.2" fill="#cfe9d6"/></svg>
<svg class="b" style="left:1492px;top:81px;" width="19" height="18" viewBox="0 0 19 18"><path d="M1.5 1 7.5 5.5h4L17.5 1l-1 6 1.5 4.5-2 4-4 1-1.5-1.5h-2L7 16.5l-4-1-2-4L2.5 7z" fill="#e2761b"/><path d="M7.5 5.5h4l1 5-3 1.5-3-1.5z" fill="#f6851b"/><path d="M1.5 1 7.5 5.5 6.5 10.5 2.5 7zM17.5 1 11.5 5.5 12.5 10.5 16.5 7z" fill="#cd6116"/><path d="M7 13.5h5l-.5 2h-4z" fill="#c0ad9e"/><path d="M5.5 9.5l1.5.7-.8 1zM13.5 9.5l-1.5.7.8 1z" fill="#233447"/></svg>
<svg class="b" style="left:1529px;top:82px;" width="18" height="17" viewBox="0 0 18 17"><path d="M1 1l8 4v11L5.5 9z" fill="#6b4df0"/><path d="M17 1 9 5v11l3.5-7z" fill="#9d8bff"/><path d="M1 1l8 4 8-4-8 7.5z" fill="#7d62f7"/></svg>
<svg class="b" style="left:1566px;top:82px;" width="17" height="17" viewBox="0 0 17 17"><rect width="17" height="17" rx="1.5" fill="#ff4a00"/><path d="M4.3 12.5V6h1.5v6.5zM7.7 12.5V5l1.8 2.3 1.8-2.3v7.5H9.8V8.8l-.3.4-.3-.4v3.7zM12 12.5V6h1.5v6.5z" fill="#fff"/></svg>
<svg class="b" style="left:1601px;top:81px;" width="18" height="18" viewBox="0 0 18 18"><path d="M5.5 1.5H4a2.5 2.5 0 0 0-2.5 2.5v1.5M12.5 1.5H14a2.5 2.5 0 0 1 2.5 2.5v1.5M5.5 16.5H4A2.5 2.5 0 0 1 1.5 14v-1.5M12.5 16.5H14a2.5 2.5 0 0 0 2.5-2.5v-1.5" fill="none" stroke="#8a1fc9" stroke-width="1.5"/><path d="M1.5 5.5v-1.5A2.5 2.5 0 0 1 4 1.5h1.5" fill="none" stroke="#3b55d9" stroke-width="1.5"/><path d="M12.5 16.5H14a2.5 2.5 0 0 0 2.5-2.5v-1.5" fill="none" stroke="#d92b4b" stroke-width="1.5"/></svg>
<span class="t" style="left:1604px;top:87px;font-size:7px;color:#111;font-weight:700;letter-spacing:-0.3px;">&lt;/&gt;</span>
<svg class="b" style="left:1637px;top:81px;" width="20" height="18" viewBox="0 0 20 18"><path d="M3 4.6h3.8a2 2 0 0 1 4 0h3.8v3.7a2.1 2.1 0 0 1 0 4.2v3.7H3v-3.8a2 2 0 0 0 0-4z" fill="none" stroke="#3c3c3c" stroke-width="1.7" stroke-linejoin="round"/><path d="M14.6 8.3a2.1 2.1 0 0 1 0 4.2z" fill="#3c3c3c"/></svg>
<div class="b" style="left:1672px;top:82px;width:2px;height:16px;background:#c7d8f5;border-radius:1px;"></div>
<div class="b" style="left:1689.5px;top:80px;width:20px;height:20px;background:#5d4037;border-radius:50%;"></div>
<span class="t" style="left:1695.3px;top:84px;font-size:12px;color:#fff;">P</span>
<div class="b" style="left:1722px;top:73px;width:192px;height:34px;background:#d3e3fd;border-radius:17px;"></div>
<span class="t" style="left:1734.5px;top:83px;font-size:14.5px;color:#0b2b5c;letter-spacing:0.244px;">New Chrome available</span>
<div class="b" style="left:1896.5px;top:83.5px;width:3.2px;height:3.2px;background:#0b2b5c;border-radius:50%;"></div>
<div class="b" style="left:1896.5px;top:89px;width:3.2px;height:3.2px;background:#0b2b5c;border-radius:50%;"></div>
<div class="b" style="left:1896.5px;top:94.5px;width:3.2px;height:3.2px;background:#0b2b5c;border-radius:50%;"></div>
<div class="b" style="left:70px;top:114px;width:1850px;height:627px;background:#fff;"></div>
<div class="b" style="left:70px;top:180px;width:1835px;height:1px;background:#e9ebec;"></div>
<svg class="b" style="left:187px;top:128px;" width="40" height="41" viewBox="0 0 40 41"><defs><clipPath id="lgc"><circle cx="20" cy="20.4" r="19"/></clipPath></defs><circle cx="20" cy="20.4" r="18.6" fill="#fff" stroke="#a9a9a9" stroke-width="1.4"/><g clip-path="url(#lgc)"><g transform="translate(20 20.4) rotate(38)" fill="none" stroke="#ababab" stroke-width="1.3"><path d="M-22 -15Q0 -18 22 -15" /><path d="M-22 -8Q0 -11 22 -8" /><path d="M-22 -1Q0 -4 22 -1" /><path d="M-22 6Q0 3 22 6" /><path d="M-22 13Q0 10 22 13" /><path d="M-15 -22Q-12.5 0 -15 22" /><path d="M-8 -22Q-5.5 0 -8 22" /><path d="M-1 -22Q1.5 0 -1 22" /><path d="M6 -22Q8.5 0 6 22" /><path d="M13 -22Q15.5 0 13 22" /></g></g><path d="M1.5 14.8C7 8.8 17 7.3 24 8.3L23.3 4.6 30.8 11.8 22 17.2l.6-3.6C15.5 12.3 8 12.8 1.5 14.8z" fill="#48dc17"/><path d="M38.3 26.4C33 32.8 23 34 16.5 32.8l.5 3.8L9.3 29.2 18 23.8l-.5 3.6C24.5 28.9 32 28.4 38.3 26.4z" fill="#48dc17"/></svg>
<span class="t" style="left:193.3px;top:143px;font-size:11.5px;color:#111;font-family:'Liberation Serif',serif;font-weight:700;font-style:italic;letter-spacing:-1.46px;">D&amp;A</span>
<div class="b" style="left:377px;top:139px;width:17px;height:2px;background:#8c8fa0;"></div>
<div class="b" style="left:377px;top:146px;width:22px;height:2px;background:#8c8fa0;"></div>
<div class="b" style="left:377px;top:153px;width:12.5px;height:2px;background:#8c8fa0;"></div>
<span class="t" style="left:441px;top:138px;font-size:18px;color:#5a5a5a;letter-spacing:0.138px;">Administration and accounting</span>
<span class="t" style="left:733px;top:138px;font-size:18px;color:#212529;font-weight:700;letter-spacing:-0.47px;">Travel dashboard</span>
<div class="b" style="left:710px;top:178px;width:188px;height:3px;background:#1764f7;"></div>
<svg class="b" style="left:1634px;top:135px;" width="22" height="24" viewBox="0 0 22 24"><path d="M3 17.5h16c-1.5-1.5-2.3-3-2.3-5.5V8a5.7 5.7 0 0 0-11.4 0V12c0 2.5-.8 4-2.3 5.5z" fill="none" stroke="#878a99" stroke-width="1.9" stroke-linejoin="round"/><path d="M8.5 21h5" stroke="#878a99" stroke-width="1.9"/></svg>
<div class="b" style="left:1646.5px;top:118.2px;width:21px;height:21px;background:#f06548;border-radius:50%;"></div>
<span class="t" style="left:1653.6px;top:124px;font-size:11.5px;color:#fff;font-weight:700;">6</span>
<div class="b" style="left:1686px;top:114px;width:193px;height:66px;background:#e2e2e2;"></div>
<svg class="b" style="left:1702.5px;top:129px;" width="36" height="36" viewBox="0 0 36 36"><defs><clipPath id="avc"><circle cx="18" cy="18" r="17.7"/></clipPath><radialGradient id="avg" cx="0.25" cy="0.55" r="0.55"><stop offset="0" stop-color="#343644"/><stop offset="1" stop-color="#0a0b12"/></radialGradient><filter id="avb" x="-10%" y="-10%" width="120%" height="120%"><feGaussianBlur stdDeviation="0.45"/></filter></defs><g clip-path="url(#avc)"><rect width="36" height="36" fill="url(#avg)"/><g filter="url(#avb)"><rect x="24" y="14" width="6" height="14" rx="3" fill="#4a4a44" opacity="0.7"/><rect x="15.5" y="18" width="9" height="8" fill="#8a6850"/><ellipse cx="20" cy="13.3" rx="6.6" ry="7.8" fill="#ad8467"/><ellipse cx="26.6" cy="13.2" rx="1" ry="1.8" fill="#a2775a"/><path d="M12.8 12.5C11.5 3.5 18 .8 21 .9c4.5 0 8 3 7 11.6-.8-4.5-2.5-6.3-7.5-6.3s-7 2-7.7 6.3z" fill="#bfc0ba"/><path d="M14.6 10.6h4.4v1.3h-4.4zM21 10.6h4.6v1.3H21z" fill="#33251e"/><path d="M13.7 14.5c-.2 9.5 13 9.5 12.9 0-1.2 3.3-3 3.3-6.5 3.3s-5.3 0-6.4-3.3z" fill="#2b201b"/><rect x="18.3" y="17.6" width="3" height="1.1" rx=".5" fill="#8a5148"/><path d="M0 36v-6.5c4-3.5 9.5-5.8 15-6.8l4.5 4.3 5.5-4.8c4.5 1 8.5 3 11 5.8V36z" fill="#06070a"/><path d="M2 29c3.5-3 8-5.2 12.3-6.2l.7 1.6C10.5 25.6 6 28 3 31z" fill="#c8d31c"/><path d="M25 22.6c3.5.9 7 2.5 9.5 4.6l-.8 1.2c-2.5-1.9-5.7-3.3-8.9-4.2z" fill="#98a02c"/><rect x="22.6" y="23.5" width="9.5" height="2.6" fill="#c4c4bb" opacity="0.85"/><circle cx="25" cy="33.7" r="1.8" fill="#d0d1a4"/><path d="M8 33l2.5-1 .4.8-2.5 1.2z" fill="#c8d31c"/></g></g></svg>
<span class="t" style="left:1752px;top:130px;font-size:14.5px;color:#495057;font-weight:700;letter-spacing:-0.573px;">Admin1 Admin</span>
<span class="t" style="left:1752px;top:151px;font-size:13.5px;color:#878a99;letter-spacing:-0.213px;">admin@gmail.com</span>
<div class="b" style="left:1905px;top:114px;width:15px;height:627px;background:#f1f1f1;"></div>
<svg class="b" style="left:1905px;top:114px;" width="15" height="15" viewBox="0 0 15 15"><path d="M3.8 10.3 7.5 5.7l3.7 4.6z" fill="#a3a3a3"/></svg>
<div class="b" style="left:1907px;top:129px;width:11px;height:390px;background:#c1c1c1;"></div>
<svg class="b" style="left:1905px;top:727px;" width="15" height="15" viewBox="0 0 15 15"><path d="M3.3 4.2 7.5 9.2l4.2-5z" fill="#505050"/></svg>
<div class="b" style="left:329px;top:181px;width:1px;height:560px;background:#f0f0f0;"></div>
<div class="b" style="left:330px;top:181px;width:14px;height:560px;background:#f1f1f1;"></div>
<svg class="b" style="left:330px;top:181px;" width="14" height="14" viewBox="0 0 14 14"><path d="M3.5 9.5 7 5.2l3.5 4.3z" fill="#a3a3a3"/></svg>
<div class="b" style="left:331.5px;top:196px;width:10.5px;height:487px;background:#c1c1c1;"></div>
<svg class="b" style="left:330px;top:727.5px;" width="14" height="14" viewBox="0 0 14 14"><path d="M2.8 4 7 9l4.2-5z" fill="#505050"/></svg>
<div class="b" style="left:70px;top:354px;width:259px;height:50.5px;background:#cfe0fc;"></div>
<div class="b" style="left:70px;top:354px;width:3px;height:50.5px;background:#0a58ff;"></div>
<svg class="b" style="left:97px;top:215.2px;" width="19" height="19" viewBox="0 0 19 19"><circle cx="9" cy="9" r="7.6" fill="none" stroke="#5b5b5b" stroke-width="1.7"/><path d="M3.8 11.2a5.3 5.3 0 0 1 8.6-5.8" fill="none" stroke="#5b5b5b" stroke-width="1.7"/><path d="M12.6 4.6 9.3 9" fill="none" stroke="#5b5b5b" stroke-width="1.7"/><circle cx="9" cy="10" r="1.7" fill="none" stroke="#5b5b5b" stroke-width="1.7"/></svg>
<span class="t" style="left:128px;top:217px;font-size:16px;color:#5b5b5b;letter-spacing:0.216px;">Dashboard</span>
<svg class="b" style="left:97px;top:267.3px;" width="19" height="19" viewBox="0 0 19 19"><rect x="1.2" y="4.6" width="15.6" height="11.4" fill="none" stroke="#5b5b5b" stroke-width="1.7"/><path d="M5.8 4.6V1.8h6.4v2.8" fill="none" stroke="#5b5b5b" stroke-width="1.7"/><path d="M1.2 9.7h5.6M11.2 9.7h5.6" fill="none" stroke="#5b5b5b" stroke-width="1.7"/><rect x="6.9" y="8.2" width="4.2" height="3.2" fill="none" stroke="#5b5b5b" stroke-width="1.7"/></svg>
<span class="t" style="left:128px;top:269px;font-size:16px;color:#5b5b5b;letter-spacing:0px;">In Real Time</span>
<svg class="b" style="left:97px;top:319px;" width="19" height="19" viewBox="0 0 19 19"><path d="M9 16.8 4.3 11.9a6.7 6.7 0 1 1 9.4 0z" fill="none" stroke="#5b5b5b" stroke-width="1.7" stroke-linejoin="round"/><circle cx="9" cy="7.5" r="1.3" fill="none" stroke="#5b5b5b" stroke-width="1.7"/></svg>
<span class="t" style="left:128px;top:320px;font-size:16px;color:#5b5b5b;letter-spacing:0.221px;">Get Track</span>
<svg class="b" style="left:97px;top:370.5px;" width="19" height="19" viewBox="0 0 19 19"><path d="M13 13.5V2H2v14h12.5a2 2 0 0 0 2-2v-.5h-5" fill="none" stroke="#1a6dff" stroke-width="1.7" stroke-linejoin="round"/><path d="M4.8 5.8h5.6M4.8 8.8h5.6M4.8 11.8h3.4" fill="none" stroke="#1a6dff" stroke-width="1.7"/></svg>
<span class="t" style="left:128px;top:372px;font-size:16px;color:#1a6dff;letter-spacing:0.338px;">Trip List</span>
<svg class="b" style="left:97px;top:430.9px;" width="19" height="19" viewBox="0 0 19 19"><path d="M1 3.3h17M1 9.2h7.5M1 14.8h6.5" fill="none" stroke="#5b5b5b" stroke-width="1.7"/><circle cx="14.2" cy="11.8" r="3.4" fill="none" stroke="#5b5b5b" stroke-width="1.8" stroke-dasharray="1.8 1.76"/><circle cx="14.2" cy="11.8" r="2.1" fill="none" stroke="#5b5b5b" stroke-width="1.7"/></svg>
<svg class="b" style="left:97px;top:493px;" width="19" height="19" viewBox="0 0 19 19"><path d="M2 17v-7l1.8-5h6" fill="none" stroke="#5b5b5b" stroke-width="1.7"/><path d="M2 10h14v7" fill="none" stroke="#5b5b5b" stroke-width="1.7"/><path d="M2 14.5h14" fill="none" stroke="#5b5b5b" stroke-width="1.7"/><path d="M2 14.5V18h2.8v-3.5M13.2 14.5V18H16v-3.5" fill="none" stroke="#5b5b5b" stroke-width="1.7"/><circle cx="14.3" cy="3.8" r="2.8" fill="none" stroke="#5b5b5b" stroke-width="1.7"/><path d="M13 4h2.6" fill="none" stroke="#5b5b5b" stroke-width="1.7"/><path d="M4.5 12.2h1.5M12 12.2h1.5" fill="none" stroke="#5b5b5b" stroke-width="1.7"/></svg>
<span class="t" style="left:128px;top:495px;font-size:16px;color:#5b5b5b;letter-spacing:0.217px;">Vehicle Management</span>
<svg class="b" style="left:97px;top:545.5px;" width="19" height="19" viewBox="0 0 19 19"><circle cx="9" cy="9" r="7.6" fill="none" stroke="#5b5b5b" stroke-width="1.7"/><circle cx="6.3" cy="7.3" r="1.2" fill="#5b5b5b"/><circle cx="11.7" cy="7.3" r="1.2" fill="#5b5b5b"/><path d="M2 10.8h14M9 10.8v5.6M5.6 10.8l-1.3 3.8M12.4 10.8l1.3 3.8" fill="none" stroke="#5b5b5b" stroke-width="1.7"/></svg>
<span class="t" style="left:128px;top:547px;font-size:16px;color:#5b5b5b;letter-spacing:0.206px;">User Management</span>
<svg class="b" style="left:97px;top:597px;" width="19" height="19" viewBox="0 0 19 19"><circle cx="9" cy="5.3" r="3.5" fill="none" stroke="#5b5b5b" stroke-width="1.7"/><path d="M3.3 17.5v-2a4 4 0 0 1 4-4h3.4a4 4 0 0 1 4 4v2" fill="none" stroke="#5b5b5b" stroke-width="1.7"/></svg>
<span class="t" style="left:128px;top:599px;font-size:16px;color:#5b5b5b;letter-spacing:0.331px;">Driver Management</span>
<svg class="b" style="left:97px;top:648.5px;" width="19" height="19" viewBox="0 0 19 19"><circle cx="8" cy="5.3" r="3.5" fill="none" stroke="#5b5b5b" stroke-width="1.7"/><path d="M2.3 17.5v-2a4 4 0 0 1 4-4h3" fill="none" stroke="#5b5b5b" stroke-width="1.7"/><path d="M11 14.8l1.8 1.8 3.7-3.7" fill="none" stroke="#5b5b5b" stroke-width="1.7"/></svg>
<span class="t" style="left:128px;top:650px;font-size:16px;color:#5b5b5b;letter-spacing:0.076px;">User Permissions</span>
<svg class="b" style="left:97px;top:700px;" width="19" height="19" viewBox="0 0 19 19"><circle cx="9" cy="2.8" r="1.7" fill="#5b5b5b"/><circle cx="14.5" cy="4.8" r="1.7" fill="#5b5b5b"/><path d="M1 9.5h3.5v7.5H1z" fill="none" stroke="#5b5b5b" stroke-width="1.7"/><path d="M4.5 10.5h4.5l3 1.5c1 .5.8 2-.5 2H8.5" fill="none" stroke="#5b5b5b" stroke-width="1.7"/><path d="M4.5 15.5l5 1.5 7.5-3.5c1-.6.3-2.2-1-1.7L12.5 13" fill="none" stroke="#5b5b5b" stroke-width="1.7" stroke-linejoin="round"/></svg>
<span class="t" style="left:128px;top:702px;font-size:16px;color:#5b5b5b;letter-spacing:0.238px;">Salary Management</span>
<span class="t" style="left:128px;top:421px;font-size:16px;color:#5b5b5b;letter-spacing:0.172px;">Maintenance &amp;</span>
<span class="t" style="left:128px;top:446px;font-size:16px;color:#5b5b5b;letter-spacing:0.129px;">Insurance</span>
<div class="b" style="left:371px;top:206px;width:1508px;height:69px;background:#f3f3f3;"></div>
<span class="t" style="left:389.5px;top:229px;font-size:23px;color:#212121;letter-spacing:-0.231px;">List of confirmed trips</span>
<div class="b" style="left:371px;top:302px;width:165px;height:42px;background:#fff;border:1px solid #ced4da;border-radius:4px;box-sizing:border-box;"></div>
<span class="t" style="left:386px;top:315px;font-size:16px;color:#495057;letter-spacing:0.109px;">All</span>
<svg class="b" style="left:514px;top:318px;" width="14" height="12" viewBox="0 0 14 12"><path d="M1.8 3.3 7 8.7l5.2-5.4" fill="none" stroke="#212529" stroke-width="1.7"/></svg>
<span class="t" style="left:554.5px;top:316px;font-size:13.5px;color:#5a5f66;font-weight:700;letter-spacing:-0.689px;">From Time</span>
<span class="t" style="left:866.8px;top:316px;font-size:13.5px;color:#5a5f66;font-weight:700;letter-spacing:-0.925px;">To Time</span>
<div class="b" style="left:629px;top:302px;width:220px;height:41px;background:#f4f4f4;"></div>
<div class="b" style="left:629px;top:343px;width:220px;height:1px;background:#8d8d8d;"></div>
<svg class="b" style="left:643.5px;top:313.5px;" width="19" height="19" viewBox="0 0 19 19"><rect x="1" y="2.8" width="16.5" height="14.5" rx="2.5" fill="none" stroke="#262626" stroke-width="1.5"/><path d="M1 7.3h16.5M5.3 .5v3.5M13.2 .5v3.5" stroke="#262626" stroke-width="1.5"/></svg>
<span class="t" style="left:673px;top:315px;font-size:16px;color:#6a6d73;letter-spacing:-0.173px;">Jun 30, 2025 06:46 PM</span>
<div class="b" style="left:941px;top:302px;width:220px;height:41px;background:#f4f4f4;"></div>
<div class="b" style="left:941px;top:343px;width:220px;height:1px;background:#8d8d8d;"></div>
<svg class="b" style="left:955.5px;top:313.5px;" width="19" height="19" viewBox="0 0 19 19"><rect x="1" y="2.8" width="16.5" height="14.5" rx="2.5" fill="none" stroke="#262626" stroke-width="1.5"/><path d="M1 7.3h16.5M5.3 .5v3.5M13.2 .5v3.5" stroke="#262626" stroke-width="1.5"/></svg>
<span class="t" style="left:985.5px;top:315px;font-size:16px;color:#6a6d73;letter-spacing:-0.173px;">Jun 30, 2025 06:46 PM</span>
<div class="b" style="left:1319px;top:306px;width:275px;height:33px;background:#f4f4f4;border-radius:3px 3px 0 0;"></div>
<div class="b" style="left:1319px;top:343.5px;width:275px;height:1px;background:#6f6f6f;"></div>
<svg class="b" style="left:1329.5px;top:314.5px;" width="14" height="14" viewBox="0 0 14 14"><circle cx="6.3" cy="6.3" r="4.9" fill="none" stroke="#333" stroke-width="1.4"/><path d="M9.8 9.8 12.8 12.8" stroke="#333" stroke-width="1.4"/></svg>
<span class="t" style="left:1359px;top:315px;font-size:15px;color:#9a9ea8;letter-spacing:-0.223px;">Search input text</span>
<div class="b" style="left:1605px;top:304px;width:124px;height:41px;background:#3577f1;border-radius:4px;"></div>
<span class="t" style="left:1622px;top:317px;font-size:15px;color:#fff;letter-spacing:-0.487px;">Upload File</span>
<svg class="b" style="left:1699px;top:318.5px;" width="13" height="12" viewBox="0 0 13 12"><path d="M6.5 8V1.5M3.7 4 6.5 1.2 9.3 4" fill="none" stroke="#fff" stroke-width="1.4"/><path d="M1.2 7v3.5h10.6V7" fill="none" stroke="#fff" stroke-width="1.5"/></svg>
<div class="b" style="left:1738px;top:304px;width:141px;height:41px;background:#3577f1;border-radius:4px;"></div>
<span class="t" style="left:1755.5px;top:317px;font-size:15px;color:#fff;letter-spacing:-0.404px;">New Journey</span>
<svg class="b" style="left:1850px;top:319.5px;" width="10" height="10" viewBox="0 0 10 10"><path d="M5 1v8M1 5h8" stroke="#fff" stroke-width="1.3"/></svg>
<div class="b" style="left:371px;top:371px;width:1493px;height:64.5px;background:#e0e0e0;"></div>
<span class="t" style="left:389.5px;top:391px;font-size:15.5px;color:#1f1f1f;font-weight:700;letter-spacing:-0.097px;">Trip ID</span>
<span class="t" style="left:513px;top:391px;font-size:15.5px;color:#1f1f1f;font-weight:700;letter-spacing:-0.335px;">Customer</span>
<span class="t" style="left:619px;top:391px;font-size:15.5px;color:#1f1f1f;font-weight:700;letter-spacing:-0.16px;">Driver name</span>
<span class="t" style="left:788px;top:391px;font-size:15.5px;color:#1f1f1f;font-weight:700;letter-spacing:-0.246px;">Start Location</span>
<span class="t" style="left:995px;top:391px;font-size:15.5px;color:#1f1f1f;font-weight:700;letter-spacing:-0.469px;">End Location</span>
<span class="t" style="left:1143.5px;top:391px;font-size:15.5px;color:#1f1f1f;font-weight:700;letter-spacing:-0.297px;">Vehicle</span>
<span class="t" style="left:1253.5px;top:391px;font-size:15.5px;color:#1f1f1f;font-weight:700;letter-spacing:0.032px;">Start Date</span>
<span class="t" style="left:1365.6px;top:391px;font-size:15.5px;color:#1f1f1f;font-weight:700;letter-spacing:-0.254px;">End Date</span>
<span class="t" style="left:1469.7px;top:391px;font-size:15.5px;color:#1f1f1f;font-weight:700;letter-spacing:-0.158px;">Complete Trip</span>
<span class="t" style="left:1607.5px;top:391px;font-size:15.5px;color:#1f1f1f;font-weight:700;letter-spacing:-0.291px;">Cancel Trip</span>
<span class="t" style="left:1724px;top:391px;font-size:15.5px;color:#1f1f1f;font-weight:700;letter-spacing:-0.324px;">Action</span>
<div class="b" style="left:371px;top:537px;width:1493px;height:103.5px;background:#f6f6f6;"></div>
<div class="b" style="left:371px;top:537px;width:1493px;height:1px;background:#e6e6e6;"></div>
<div class="b" style="left:371px;top:640px;width:1493px;height:1px;background:#e6e6e6;"></div>
<div class="b" style="left:389.5px;top:464.1px;width:6px;height:2.2px;background:#333;"></div>
<span class="t" style="left:513px;top:456px;font-size:16px;color:#4f4f4f;letter-spacing:-1.089px;">AMAZON</span>
<div class="b" style="left:636.5px;top:462.1px;width:5px;height:5px;background:#444;border-radius:50%;"></div>
<span class="t" style="left:654px;top:456px;font-size:16px;color:#4f4f4f;letter-spacing:-0.094px;">Driver1</span>
<span class="t" style="left:654px;top:476px;font-size:16px;color:#4f4f4f;letter-spacing:0.182px;">driver1</span>
<span class="t" style="left:788px;top:456px;font-size:16px;color:#4f4f4f;letter-spacing:-0.266px;">LIN8</span>
<span class="t" style="left:995px;top:456px;font-size:16px;color:#4f4f4f;letter-spacing:-1.594px;">DTC1</span>
<span class="t" style="left:1253.5px;top:456px;font-size:16px;color:#4f4f4f;letter-spacing:-0.441px;">Wed, Jun</span>
<span class="t" style="left:1253.5px;top:476px;font-size:16px;color:#4f4f4f;letter-spacing:0.174px;">25 2025,</span>
<span class="t" style="left:1253.5px;top:495px;font-size:16px;color:#4f4f4f;letter-spacing:0.113px;">06:10 pm</span>
<span class="t" style="left:1365.6px;top:456px;font-size:16px;color:#4f4f4f;letter-spacing:-0.278px;">Fri, Jun</span>
<span class="t" style="left:1365.6px;top:476px;font-size:16px;color:#4f4f4f;letter-spacing:0.16px;">27 2025,</span>
<span class="t" style="left:1365.6px;top:495px;font-size:16px;color:#4f4f4f;letter-spacing:0.098px;">12:09 am</span>
<span class="t" style="left:1143.5px;top:456px;font-size:16px;color:#4f4f4f;letter-spacing:-0.275px;">XA295NH</span>
<div class="b" style="left:1481px;top:453.8px;width:66px;height:33px;background:#4caf50;border-radius:17px;"></div>
<div class="b" style="left:1516.5px;top:456.5px;width:27.6px;height:27.6px;background:#fff;border-radius:50%;"></div>
<svg class="b" style="left:1522px;top:462.8px;" width="17" height="15" viewBox="0 0 17 15"><path d="M2.5 8 6.5 11.7 14 3.3" fill="none" stroke="#4caf50" stroke-width="1.4"/></svg>
<div class="b" style="left:1618px;top:453.8px;width:66px;height:33px;background:#4caf50;border-radius:17px;"></div>
<div class="b" style="left:1653.5px;top:456.5px;width:27.6px;height:27.6px;background:#fff;border-radius:50%;"></div>
<svg class="b" style="left:1659px;top:462.8px;" width="17" height="15" viewBox="0 0 17 15"><path d="M2.5 8 6.5 11.7 14 3.3" fill="none" stroke="#4caf50" stroke-width="1.4"/></svg>
<svg class="b" style="left:1725px;top:453.6px;" width="20" height="21" viewBox="0 0 20 21"><circle cx="8.3" cy="5" r="5" fill="#0d7cff"/><path d="M.8 19.6c0-5 3-8.6 7.5-8.6 2 0 3.6.7 4.9 1.8v2.4h-2.4v4.4z" fill="#0d7cff"/><path d="M15.3 13.5v6.5M12 16.7h6.6" stroke="#0d7cff" stroke-width="1.8"/></svg>
<svg class="b" style="left:1758px;top:454.6px;" width="21" height="17" viewBox="0 0 21 17"><ellipse cx="10.5" cy="8.5" rx="10" ry="8.3" fill="#e9a21b"/><circle cx="10.5" cy="8.5" r="4.7" fill="#fff"/><circle cx="10.5" cy="8.5" r="2.5" fill="#e9a21b"/></svg>
<svg class="b" style="left:1792px;top:454.6px;" width="19" height="18" viewBox="0 0 19 18"><path d="M.5 17.5l1-4.5L11.8 2.7l3.5 3.5L5 16.5z" fill="#0d7cff"/><path d="M12.8 1.7l1.1-1.1c.5-.5 1.2-.5 1.7 0l1.8 1.8c.5.5.5 1.2 0 1.7l-1.1 1.1z" fill="#0d7cff"/></svg>
<svg class="b" style="left:1825px;top:453.6px;" width="19" height="20" viewBox="0 0 19 20"><path d="M6.3 1.5h6.4" stroke="#ff0000" stroke-width="2.2"/><rect x=".3" y="2.8" width="18.4" height="3" fill="#ff0000"/><path d="M1.8 5h15.4v12a2 2 0 0 1-2 2H3.8a2 2 0 0 1-2-2z" fill="#ff0000"/><rect x="6.3" y="8.3" width="1.9" height="6.6" fill="#fff"/><rect x="10.8" y="8.3" width="1.9" height="6.6" fill="#fff"/></svg>
<div class="b" style="left:389.5px;top:566.1px;width:6px;height:2.2px;background:#333;"></div>
<span class="t" style="left:513px;top:558px;font-size:16px;color:#4f4f4f;letter-spacing:-1.895px;">XPO</span>
<div class="b" style="left:636.5px;top:564.1px;width:5px;height:5px;background:#444;border-radius:50%;"></div>
<span class="t" style="left:654px;top:558px;font-size:16px;color:#4f4f4f;letter-spacing:-0.018px;">Phil foden</span>
<span class="t" style="left:788px;top:558px;font-size:16px;color:#4f4f4f;letter-spacing:-0.184px;">35020 SALATA+37060</span>
<span class="t" style="left:788px;top:578px;font-size:16px;color:#4f4f4f;letter-spacing:-1.781px;">SONA</span>
<span class="t" style="left:995px;top:558px;font-size:16px;color:#4f4f4f;letter-spacing:-1.033px;">PIEVE</span>
<span class="t" style="left:995px;top:578px;font-size:16px;color:#4f4f4f;letter-spacing:-0.869px;">EMANUELE IT</span>
<span class="t" style="left:995px;top:597px;font-size:16px;color:#4f4f4f;letter-spacing:0.049px;">20019 A\R</span>
<span class="t" style="left:1253.5px;top:558px;font-size:16px;color:#4f4f4f;letter-spacing:-0.394px;">Tue, Jun</span>
<span class="t" style="left:1253.5px;top:578px;font-size:16px;color:#4f4f4f;letter-spacing:0.174px;">24 2025,</span>
<span class="t" style="left:1253.5px;top:597px;font-size:16px;color:#4f4f4f;letter-spacing:0.113px;">05:45 pm</span>
<span class="t" style="left:1365.6px;top:558px;font-size:16px;color:#4f4f4f;letter-spacing:-0.265px;">Thu, Jun</span>
<span class="t" style="left:1365.6px;top:578px;font-size:16px;color:#4f4f4f;letter-spacing:0.16px;">26 2025,</span>
<span class="t" style="left:1365.6px;top:597px;font-size:16px;color:#4f4f4f;letter-spacing:0.098px;">09:00 am</span>
<span class="t" style="left:1143.5px;top:558px;font-size:16px;color:#4f4f4f;letter-spacing:-0.056px;">XA12213</span>
<div class="b" style="left:1481px;top:555.8000000000001px;width:66px;height:33px;background:#fff;border-radius:17px;border:2px solid #7f7d84;box-sizing:border-box;"></div>
<div class="b" style="left:1484.6px;top:559.1px;width:26.4px;height:26.4px;background:#525252;border-radius:50%;"></div>
<svg class="b" style="left:1490.8px;top:565.3000000000001px;" width="14" height="14" viewBox="0 0 14 14"><path d="M2.5 2.5 11.5 11.5M11.5 2.5 2.5 11.5" stroke="#fff" stroke-width="1.4"/></svg>
<div class="b" style="left:1618px;top:555.8000000000001px;width:66px;height:33px;background:#fff;border-radius:17px;border:2px solid #7f7d84;box-sizing:border-box;"></div>
<div class="b" style="left:1621.6px;top:559.1px;width:26.4px;height:26.4px;background:#525252;border-radius:50%;"></div>
<svg class="b" style="left:1627.8px;top:565.3000000000001px;" width="14" height="14" viewBox="0 0 14 14"><path d="M2.5 2.5 11.5 11.5M11.5 2.5 2.5 11.5" stroke="#fff" stroke-width="1.4"/></svg>
<svg class="b" style="left:1725px;top:555.6px;" width="20" height="21" viewBox="0 0 20 21"><circle cx="8.3" cy="5" r="5" fill="#0d7cff"/><path d="M.8 19.6c0-5 3-8.6 7.5-8.6 2 0 3.6.7 4.9 1.8v2.4h-2.4v4.4z" fill="#0d7cff"/><path d="M15.3 13.5v6.5M12 16.7h6.6" stroke="#0d7cff" stroke-width="1.8"/></svg>
<svg class="b" style="left:1758px;top:556.6px;" width="21" height="17" viewBox="0 0 21 17"><ellipse cx="10.5" cy="8.5" rx="10" ry="8.3" fill="#e9a21b"/><circle cx="10.5" cy="8.5" r="4.7" fill="#fff"/><circle cx="10.5" cy="8.5" r="2.5" fill="#e9a21b"/></svg>
<svg class="b" style="left:1792px;top:556.6px;" width="19" height="18" viewBox="0 0 19 18"><path d="M.5 17.5l1-4.5L11.8 2.7l3.5 3.5L5 16.5z" fill="#0d7cff"/><path d="M12.8 1.7l1.1-1.1c.5-.5 1.2-.5 1.7 0l1.8 1.8c.5.5.5 1.2 0 1.7l-1.1 1.1z" fill="#0d7cff"/></svg>
<svg class="b" style="left:1825px;top:555.6px;" width="19" height="20" viewBox="0 0 19 20"><path d="M6.3 1.5h6.4" stroke="#ff0000" stroke-width="2.2"/><rect x=".3" y="2.8" width="18.4" height="3" fill="#ff0000"/><path d="M1.8 5h15.4v12a2 2 0 0 1-2 2H3.8a2 2 0 0 1-2-2z" fill="#ff0000"/><rect x="6.3" y="8.3" width="1.9" height="6.6" fill="#fff"/><rect x="10.8" y="8.3" width="1.9" height="6.6" fill="#fff"/></svg>
<div class="b" style="left:389.5px;top:668.1px;width:6px;height:2.2px;background:#333;"></div>
<span class="t" style="left:513px;top:660px;font-size:16px;color:#4f4f4f;letter-spacing:-1.895px;">XPO</span>
<div class="b" style="left:636.5px;top:666.1px;width:5px;height:5px;background:#444;border-radius:50%;"></div>
<span class="t" style="left:654px;top:660px;font-size:16px;color:#4f4f4f;letter-spacing:-1.114px;">BARGAN</span>
<span class="t" style="left:654px;top:680px;font-size:16px;color:#4f4f4f;letter-spacing:-0.8px;">RODION</span>
<span class="t" style="left:788px;top:660px;font-size:16px;color:#4f4f4f;letter-spacing:-0.279px;">20098 SAN GIULIANO</span>
<span class="t" style="left:788px;top:680px;font-size:16px;color:#4f4f4f;letter-spacing:-0.548px;">MILANESE, IT</span>
<span class="t" style="left:995px;top:660px;font-size:16px;color:#4f4f4f;letter-spacing:0.377px;">40010</span>
<span class="t" style="left:995px;top:680px;font-size:16px;color:#4f4f4f;letter-spacing:-0.629px;">BENTIVOGLIO,</span>
<span class="t" style="left:995px;top:700px;font-size:16px;color:#4f4f4f;letter-spacing:-0.219px;">IT</span>
<span class="t" style="left:1253.5px;top:660px;font-size:16px;color:#4f4f4f;letter-spacing:-0.188px;">Mon, Jun</span>
<span class="t" style="left:1253.5px;top:680px;font-size:16px;color:#4f4f4f;letter-spacing:0.174px;">23 2025,</span>
<span class="t" style="left:1253.5px;top:700px;font-size:16px;color:#4f4f4f;letter-spacing:0.113px;">05:30 pm</span>
<span class="t" style="left:1365.6px;top:660px;font-size:16px;color:#4f4f4f;letter-spacing:-0.265px;">Thu, Jun</span>
<span class="t" style="left:1365.6px;top:680px;font-size:16px;color:#4f4f4f;letter-spacing:0.16px;">26 2025,</span>
<span class="t" style="left:1365.6px;top:700px;font-size:16px;color:#4f4f4f;letter-spacing:0.098px;">05:30 am</span>
<span class="t" style="left:1143.5px;top:660px;font-size:16px;color:#4f4f4f;letter-spacing:-0.57px;">XA657MR</span>
<div class="b" style="left:1481px;top:657.8000000000001px;width:66px;height:33px;background:#fff;border-radius:17px;border:2px solid #7f7d84;box-sizing:border-box;"></div>
<div class="b" style="left:1484.6px;top:661.1px;width:26.4px;height:26.4px;background:#525252;border-radius:50%;"></div>
<svg class="b" style="left:1490.8px;top:667.3000000000001px;" width="14" height="14" viewBox="0 0 14 14"><path d="M2.5 2.5 11.5 11.5M11.5 2.5 2.5 11.5" stroke="#fff" stroke-width="1.4"/></svg>
<div class="b" style="left:1618px;top:657.8000000000001px;width:66px;height:33px;background:#fff;border-radius:17px;border:2px solid #7f7d84;box-sizing:border-box;"></div>
<div class="b" style="left:1621.6px;top:661.1px;width:26.4px;height:26.4px;background:#525252;border-radius:50%;"></div>
<svg class="b" style="left:1627.8px;top:667.3000000000001px;" width="14" height="14" viewBox="0 0 14 14"><path d="M2.5 2.5 11.5 11.5M11.5 2.5 2.5 11.5" stroke="#fff" stroke-width="1.4"/></svg>
<svg class="b" style="left:1725px;top:657.6px;" width="20" height="21" viewBox="0 0 20 21"><circle cx="8.3" cy="5" r="5" fill="#0d7cff"/><path d="M.8 19.6c0-5 3-8.6 7.5-8.6 2 0 3.6.7 4.9 1.8v2.4h-2.4v4.4z" fill="#0d7cff"/><path d="M15.3 13.5v6.5M12 16.7h6.6" stroke="#0d7cff" stroke-width="1.8"/></svg>
<svg class="b" style="left:1758px;top:658.6px;" width="21" height="17" viewBox="0 0 21 17"><ellipse cx="10.5" cy="8.5" rx="10" ry="8.3" fill="#e9a21b"/><circle cx="10.5" cy="8.5" r="4.7" fill="#fff"/><circle cx="10.5" cy="8.5" r="2.5" fill="#e9a21b"/></svg>
<svg class="b" style="left:1792px;top:658.6px;" width="19" height="18" viewBox="0 0 19 18"><path d="M.5 17.5l1-4.5L11.8 2.7l3.5 3.5L5 16.5z" fill="#0d7cff"/><path d="M12.8 1.7l1.1-1.1c.5-.5 1.2-.5 1.7 0l1.8 1.8c.5.5.5 1.2 0 1.7l-1.1 1.1z" fill="#0d7cff"/></svg>
<svg class="b" style="left:1825px;top:657.6px;" width="19" height="20" viewBox="0 0 19 20"><path d="M6.3 1.5h6.4" stroke="#ff0000" stroke-width="2.2"/><rect x=".3" y="2.8" width="18.4" height="3" fill="#ff0000"/><path d="M1.8 5h15.4v12a2 2 0 0 1-2 2H3.8a2 2 0 0 1-2-2z" fill="#ff0000"/><rect x="6.3" y="8.3" width="1.9" height="6.6" fill="#fff"/><rect x="10.8" y="8.3" width="1.9" height="6.6" fill="#fff"/></svg>
<div class="b" style="left:1864px;top:371px;width:15px;height:370px;background:#f1f1f1;"></div>
<svg class="b" style="left:1864px;top:371px;" width="15" height="15" viewBox="0 0 15 15"><path d="M3.8 10.3 7.5 5.7l3.7 4.6z" fill="#a3a3a3"/></svg>
<div class="b" style="left:1866px;top:386px;width:11px;height:237px;background:#c1c1c1;"></div>
<div class="b" style="left:70px;top:741px;width:1850px;height:339px;background:#fff;"></div>
<div class="b" style="left:70px;top:741px;width:1850px;height:1px;background:#d3e3fd;"></div>
<div class="b" style="left:70px;top:742px;width:1850px;height:26px;background:#eef2fb;"></div>
<div class="b" style="left:70px;top:768px;width:1850px;height:1px;background:#d3e3fd;"></div>
<svg class="b" style="left:79px;top:747px;" width="16" height="16" viewBox="0 0 16 16"><path d="M1 13.5V1h12.5" fill="none" stroke="#444" stroke-width="1.3" stroke-dasharray="2 1.3"/><path d="M13.8 1.5v4M1.5 13.8h4" stroke="#444" stroke-width="1.3" stroke-dasharray="2 1.3"/><path d="M7 7l7 7M7 7v5.5M7 7h5.5" fill="none" stroke="#444" stroke-width="1.6"/></svg>
<svg class="b" style="left:106px;top:747px;" width="18" height="16" viewBox="0 0 18 16"><path d="M3.5 11V2.3h10.5" fill="none" stroke="#444" stroke-width="1.5"/><path d="M.5 12.5h9.5" stroke="#444" stroke-width="1.6"/><rect x="11" y="5.8" width="5.2" height="7.5" rx=".8" fill="none" stroke="#444" stroke-width="1.5"/></svg>
<div class="b" style="left:132px;top:748px;width:1px;height:14px;background:#c7d3ea;"></div>
<span class="t" style="left:150.8px;top:749px;font-size:12px;color:#0b57d0;letter-spacing:0.026px;">Elements</span>
<span class="t" style="left:225.5px;top:749px;font-size:12px;color:#1f1f1f;letter-spacing:-0.088px;">Console</span>
<span class="t" style="left:292.5px;top:749px;font-size:12px;color:#1f1f1f;letter-spacing:-0.254px;">Sources</span>
<span class="t" style="left:358.8px;top:749px;font-size:12px;color:#1f1f1f;letter-spacing:0.448px;">Network</span>
<span class="t" style="left:429.5px;top:749px;font-size:12px;color:#1f1f1f;letter-spacing:0.13px;">Performance</span>
<span class="t" style="left:523.8px;top:749px;font-size:12px;color:#1f1f1f;letter-spacing:0.373px;">Memory</span>
<span class="t" style="left:593px;top:749px;font-size:12px;color:#1f1f1f;letter-spacing:0.229px;">Application</span>
<span class="t" style="left:678.5px;top:749px;font-size:12px;color:#1f1f1f;letter-spacing:0.022px;">Security</span>
<span class="t" style="left:761.5px;top:749px;font-size:12px;color:#1f1f1f;letter-spacing:0.198px;">Lighthouse</span>
<span class="t" style="left:845.5px;top:749px;font-size:12px;color:#1f1f1f;letter-spacing:0.146px;">Performance insights</span>
<div class="b" style="left:139px;top:766.5px;width:75px;height:2.5px;background:#0b57d0;border-radius:1px 1px 0 0;"></div>
<svg class="b" style="left:965px;top:748.5px;" width="12" height="13" viewBox="0 0 12 13"><path d="M4 1h4M4.8 1v4L1.5 11.5h9L7.2 5V1" fill="none" stroke="#333" stroke-width="1.2" stroke-linejoin="round"/></svg>
<svg class="b" style="left:1732px;top:750px;" width="12" height="12" viewBox="0 0 12 12"><circle cx="6" cy="6" r="5.7" fill="#dc362e"/><path d="M3.8 3.8 8.2 8.2M8.2 3.8 3.8 8.2" stroke="#fff" stroke-width="1.3"/></svg>
<span class="t" style="left:1748px;top:750px;font-size:12px;color:#1f1f1f;">4</span>
<svg class="b" style="left:1761px;top:750px;" width="13" height="12" viewBox="0 0 13 12"><path d="M6.5 .5 12.5 11.5H.5z" fill="#e8710a"/><rect x="5.9" y="4.3" width="1.2" height="3.8" fill="#fff"/><rect x="5.9" y="9" width="1.2" height="1.2" fill="#fff"/></svg>
<span class="t" style="left:1778px;top:750px;font-size:12px;color:#1f1f1f;">7</span>
<svg class="b" style="left:1796px;top:750px;" width="12" height="12" viewBox="0 0 12 12"><path d="M1 .8h10v7.4H5L2.8 10.5V8.2H1z" fill="#dc362e"/><path d="M4.5 2.8 7.5 6M7.5 2.8 4.5 6" stroke="#fff" stroke-width="1"/></svg>
<span class="t" style="left:1811.5px;top:750px;font-size:12px;color:#1f1f1f;">1</span>
<div class="b" style="left:1829.5px;top:748px;width:1px;height:14px;background:#c7d3ea;"></div>
<svg class="b" style="left:1840px;top:747px;" width="16" height="16" viewBox="0 0 16 16"><path d="M6.8 1h2.4l.4 1.9 1.4.6 1.6-1.1 1.7 1.7-1.1 1.6.6 1.4 1.9.4v2.4l-1.9.4-.6 1.4 1.1 1.6-1.7 1.7-1.6-1.1-1.4.6-.4 1.9H6.8l-.4-1.9-1.4-.6-1.6 1.1-1.7-1.7 1.1-1.6-.6-1.4L.3 10.7V8.3l1.9-.4.6-1.4L1.7 4.9l1.7-1.7 1.6 1.1 1.4-.6z" transform="translate(0 -1.2)" fill="none" stroke="#333" stroke-width="1.3" stroke-linejoin="round"/><circle cx="8" cy="8.3" r="2.3" fill="#333"/></svg>
<div class="b" style="left:1874.5px;top:749px;width:2.6px;height:2.6px;background:#333;border-radius:50%;"></div>
<div class="b" style="left:1874.5px;top:754px;width:2.6px;height:2.6px;background:#333;border-radius:50%;"></div>
<div class="b" style="left:1874.5px;top:759px;width:2.6px;height:2.6px;background:#333;border-radius:50%;"></div>
<svg class="b" style="left:1895px;top:749px;" width="12" height="12" viewBox="0 0 12 12"><path d="M1.5 1.5 10.5 10.5M10.5 1.5 1.5 10.5" stroke="#333" stroke-width="1.4"/></svg>
<div class="b" style="left:71px;top:866.5px;width:1509px;height:15.5px;background:#f0f0f0;"></div>
<span class="t" style="left:84.5px;top:775px;font-size:11px;font-family:'Liberation Mono',monospace;"><span style="color:#a0a0a0">&lt;!DOCTYPE html&gt;</span></span>
<span class="t" style="left:84.5px;top:791px;font-size:11px;font-family:'Liberation Mono',monospace;"><span style="color:#881280">&lt;html</span><span style="color:#1f1f1f"> </span><span style="color:#994500">lang</span><span style="color:#881280">="</span><span style="color:#1a1aa6">en</span><span style="color:#881280">"</span><span style="color:#1f1f1f"> </span><span style="color:#994500">data-layout-style</span><span style="color:#881280">="</span><span style="color:#1a1aa6">default</span><span style="color:#881280">"</span><span style="color:#1f1f1f"> </span><span style="color:#994500">data-sidebar-size</span><span style="color:#881280">="</span><span style="color:#1a1aa6">lg</span><span style="color:#881280">"</span><span style="color:#1f1f1f"> </span><span style="color:#994500">data-sidebar</span><span style="color:#881280">="</span><span style="color:#1a1aa6">dark</span><span style="color:#881280">"</span><span style="color:#1f1f1f"> </span><span style="color:#994500">data-layout-width</span><span style="color:#881280">="</span><span style="color:#1a1aa6">fluid</span><span style="color:#881280">"</span><span style="color:#1f1f1f"> </span><span style="color:#994500">data-layout-position</span><span style="color:#881280">="</span><span style="color:#1a1aa6">fixed</span><span style="color:#881280">"</span><span style="color:#1f1f1f"> </span><span style="color:#994500">data-topbar</span><span style="color:#881280">="</span><span style="color:#1a1aa6">light</span><span style="color:#881280">"</span><span style="color:#1f1f1f"> </span><span style="color:#994500">data-layout</span><span style="color:#881280">="</span><span style="color:#1a1aa6">vertical</span><span style="color:#881280">"</span><span style="color:#1f1f1f"> </span><span style="color:#994500">data-sidebar-visibility</span><span style="color:#881280">="</span><span style="color:#1a1aa6">show</span><span style="color:#881280">"</span></span>
<span class="t" style="left:84.5px;top:806px;font-size:11px;font-family:'Liberation Mono',monospace;"><span style="color:#994500">suppresshydrationwarning</span><span style="color:#881280">="</span><span style="color:#1a1aa6">true</span><span style="color:#881280">"</span><span style="color:#1f1f1f"> </span><span style="color:#994500">data-qb-installed</span><span style="color:#881280">="</span><span style="color:#1a1aa6">true</span><span style="color:#881280">"</span><span style="color:#881280">&gt;</span></span>
<div class="b" style="left:463px;top:803.5px;width:45px;height:13px;background:#fff;border:1px solid #7cacf8;border-radius:7px;box-sizing:border-box;"></div>
<span class="t" style="left:470px;top:807px;font-size:9.5px;color:#0b57d0;font-family:'Liberation Mono',monospace;">scroll</span>
<svg class="b" style="left:87px;top:822px;" width="8" height="9" viewBox="0 0 8 9"><path d="M1.5 .5v8L7.5 4.5z" fill="#5f6368"/></svg>
<span class="t" style="left:97.5px;top:822px;font-size:11px;font-family:'Liberation Mono',monospace;"><span style="color:#881280">&lt;head</span><span style="color:#1f1f1f"> </span><span style="color:#994500">data-locator-hook-status-message</span><span style="color:#881280">="</span><span style="color:#1a1aa6">No valid renderers found.</span><span style="color:#881280">"</span><span style="color:#881280">&gt;</span></span>
<div class="b" style="left:541.5px;top:821.7px;width:13.5px;height:10px;background:#fff;border:1px solid #7cacf8;border-radius:5px;box-sizing:border-box;"></div>
<div class="b" style="left:544.7px;top:825.9000000000001px;width:1.6px;height:1.6px;background:#0b57d0;border-radius:50%;"></div>
<div class="b" style="left:547.5px;top:825.9000000000001px;width:1.6px;height:1.6px;background:#0b57d0;border-radius:50%;"></div>
<div class="b" style="left:550.3000000000001px;top:825.9000000000001px;width:1.6px;height:1.6px;background:#0b57d0;border-radius:50%;"></div>
<span class="t" style="left:558px;top:822px;font-size:11px;font-family:'Liberation Mono',monospace;"><span style="color:#881280">&lt;/head</span><span style="color:#881280">&gt;</span></span>
<svg class="b" style="left:86px;top:838px;" width="9" height="8" viewBox="0 0 9 8"><path d="M.5 1.5h8L4.5 7.5z" fill="#5f6368"/></svg>
<span class="t" style="left:97.5px;top:838px;font-size:11px;font-family:'Liberation Mono',monospace;"><span style="color:#881280">&lt;body</span><span style="color:#881280">&gt;</span></span>
<span class="t" style="left:108.5px;top:854px;font-size:11px;font-family:'Liberation Mono',monospace;"><span style="color:#881280">&lt;noscript&gt;</span><span style="color:#1f1f1f">You need to enable JavaScript to run this app.</span><span style="color:#881280">&lt;/noscript&gt;</span></span>
<div class="b" style="left:73.8px;top:873.3px;width:1.8px;height:1.8px;background:#333;border-radius:50%;"></div>
<div class="b" style="left:77px;top:873.3px;width:1.8px;height:1.8px;background:#333;border-radius:50%;"></div>
<div class="b" style="left:80.2px;top:873.3px;width:1.8px;height:1.8px;background:#333;border-radius:50%;"></div>
<svg class="b" style="left:97px;top:870px;" width="9" height="8" viewBox="0 0 9 8"><path d="M.5 1.5h8L4.5 7.5z" fill="#333"/></svg>
<span class="t" style="left:109px;top:870px;font-size:11px;font-family:'Liberation Mono',monospace;"><span style="color:#881280">&lt;div</span><span style="color:#1f1f1f"> </span><span style="color:#994500">id</span><span style="color:#881280">="</span><span style="color:#1a1aa6">root</span><span style="color:#881280">"</span><span style="color:#881280">&gt;</span><span style="color:#1f1f1f"> </span></span>
<span class="t" style="left:215px;top:870px;font-size:11px;font-family:'Liberation Mono',monospace;font-style:italic;"><span style="color:#8a8a8a">== </span><span style="color:#8a8a8a">$0</span></span>
<div class="b" style="left:100px;top:882px;width:1px;height:74px;background:#e0e0e0;"></div>
<svg class="b" style="left:110.5px;top:885.8px;" width="8" height="9" viewBox="0 0 8 9"><path d="M1.5 .5v8L7.5 4.5z" fill="#5f6368"/></svg>
<span class="t" style="left:121px;top:886px;font-size:11px;font-family:'Liberation Mono',monospace;"><span style="color:#881280">&lt;div</span><span style="color:#1f1f1f"> </span><span style="color:#994500">id</span><span style="color:#881280">="</span><span style="color:#1a1aa6">layout-wrapper</span><span style="color:#881280">"</span><span style="color:#881280">&gt;</span></span>
<div class="b" style="left:287.5px;top:885.5px;width:13.5px;height:10px;background:#fff;border:1px solid #7cacf8;border-radius:5px;box-sizing:border-box;"></div>
<div class="b" style="left:290.7px;top:889.7px;width:1.6px;height:1.6px;background:#0b57d0;border-radius:50%;"></div>
<div class="b" style="left:293.5px;top:889.7px;width:1.6px;height:1.6px;background:#0b57d0;border-radius:50%;"></div>
<div class="b" style="left:296.3px;top:889.7px;width:1.6px;height:1.6px;background:#0b57d0;border-radius:50%;"></div>
<span class="t" style="left:304px;top:886px;font-size:11px;font-family:'Liberation Mono',monospace;"><span style="color:#881280">&lt;/div</span><span style="color:#881280">&gt;</span></span>
<svg class="b" style="left:110.5px;top:901.8px;" width="8" height="9" viewBox="0 0 8 9"><path d="M1.5 .5v8L7.5 4.5z" fill="#5f6368"/></svg>
<span class="t" style="left:121px;top:902px;font-size:11px;font-family:'Liberation Mono',monospace;"><span style="color:#881280">&lt;button</span><span style="color:#1f1f1f"> </span><span style="color:#994500">class</span><span style="color:#881280">="</span><span style="color:#1a1aa6">btn btn-danger btn-icon</span><span style="color:#881280">"</span><span style="color:#1f1f1f"> </span><span style="color:#994500">id</span><span style="color:#881280">="</span><span style="color:#1a1aa6">back-to-top</span><span style="color:#881280">"</span><span style="color:#881280">&gt;</span></span>
<div class="b" style="left:498.5px;top:901.5px;width:13.5px;height:10px;background:#fff;border:1px solid #7cacf8;border-radius:5px;box-sizing:border-box;"></div>
<div class="b" style="left:501.7px;top:905.7px;width:1.6px;height:1.6px;background:#0b57d0;border-radius:50%;"></div>
<div class="b" style="left:504.5px;top:905.7px;width:1.6px;height:1.6px;background:#0b57d0;border-radius:50%;"></div>
<div class="b" style="left:507.3px;top:905.7px;width:1.6px;height:1.6px;background:#0b57d0;border-radius:50%;"></div>
<span class="t" style="left:515px;top:902px;font-size:11px;font-family:'Liberation Mono',monospace;"><span style="color:#881280">&lt;/button</span><span style="color:#881280">&gt;</span></span>
<span class="t" style="left:120.5px;top:918px;font-size:11px;font-family:'Liberation Mono',monospace;"><span style="color:#881280">&lt;div</span><span style="color:#881280">&gt;</span><span style="color:#881280">&lt;/div</span><span style="color:#881280">&gt;</span></span>
<span class="t" style="left:120.5px;top:934px;font-size:11px;font-family:'Liberation Mono',monospace;"><span style="color:#881280">&lt;div</span><span style="color:#1f1f1f"> </span><span style="color:#994500">class</span><span style="color:#881280">="</span><span style="color:#1a1aa6">Toastify</span><span style="color:#881280">"</span><span style="color:#881280">&gt;</span><span style="color:#881280">&lt;/div</span><span style="color:#881280">&gt;</span></span>
<span class="t" style="left:108.5px;top:950px;font-size:11px;font-family:'Liberation Mono',monospace;"><span style="color:#881280">&lt;/div</span><span style="color:#881280">&gt;</span></span>
<span class="t" style="left:108.5px;top:966px;font-size:11px;font-family:'Liberation Mono',monospace;"><span style="color:#236e25">&lt;!--</span></span>
<span class="t" style="left:147.5px;top:980px;font-size:11px;font-family:'Liberation Mono',monospace;"><span style="color:#236e25">This HTML file is a template.</span></span>
<span class="t" style="left:147.5px;top:995px;font-size:11px;font-family:'Liberation Mono',monospace;"><span style="color:#236e25">If you open it directly in the browser, you will see an empty page.</span></span>
<span class="t" style="left:147.5px;top:1024px;font-size:11px;font-family:'Liberation Mono',monospace;"><span style="color:#236e25">You can add webfonts, meta tags, or analytics to this file.</span></span>
<span class="t" style="left:147.5px;top:1040px;font-size:11px;font-family:'Liberation Mono',monospace;"><span style="color:#236e25">The build step will place the bundled scripts into the &lt;body&gt; tag.</span></span>
<div class="b" style="left:1580px;top:769px;width:15px;height:287px;background:#f1f1f1;"></div>
<svg class="b" style="left:1580px;top:769px;" width="15" height="15" viewBox="0 0 15 15"><path d="M3.8 10.3 7.5 5.7l3.7 4.6z" fill="#a3a3a3"/></svg>
<div class="b" style="left:1582px;top:784.5px;width:11px;height:188.5px;background:#c1c1c1;"></div>
<svg class="b" style="left:1580px;top:1040px;" width="15" height="15" viewBox="0 0 15 15"><path d="M3.8 4.7 7.5 9.3l3.7-4.6z" fill="#505050"/></svg>
<div class="b" style="left:70px;top:1055.5px;width:1525px;height:1px;background:#d3e3fd;"></div>
<div class="b" style="left:150px;top:1056.5px;width:62px;height:23.5px;background:#d3e3fd;"></div>
<span class="t" style="left:76.7px;top:1063px;font-size:12px;color:#881280;letter-spacing:1.043px;">html</span>
<span class="t" style="left:116.5px;top:1063px;font-size:12px;color:#881280;letter-spacing:0.16px;">body</span>
<span class="t" style="left:157.5px;top:1063px;font-size:12px;color:#881280;letter-spacing:0.687px;">div#root</span>
<div class="b" style="left:1595px;top:769px;width:1px;height:311px;background:#d3e3fd;"></div>
<div class="b" style="left:1596px;top:769px;width:324px;height:26.5px;background:#eef2fb;"></div>
<div class="b" style="left:1596px;top:795.5px;width:324px;height:1px;background:#d3e3fd;"></div>
<span class="t" style="left:1605.7px;top:776px;font-size:12px;color:#0b57d0;letter-spacing:-0.076px;">Styles</span>
<span class="t" style="left:1658px;top:776px;font-size:12px;color:#1f1f1f;letter-spacing:0.091px;">Computed</span>
<span class="t" style="left:1734.6px;top:776px;font-size:12px;color:#1f1f1f;letter-spacing:0.074px;">Layout</span>
<span class="t" style="left:1791.6px;top:776px;font-size:12px;color:#1f1f1f;letter-spacing:-0.022px;">Event Listeners</span>
<svg class="b" style="left:1888px;top:777px;" width="14" height="10" viewBox="0 0 14 10"><path d="M1.5 1 6 5 1.5 9M7.5 1 12 5 7.5 9" fill="none" stroke="#333" stroke-width="1.3"/></svg>
<div class="b" style="left:1596px;top:793.8px;width:52px;height:2.5px;background:#0b57d0;"></div>
<div class="b" style="left:1601px;top:799px;width:156.5px;height:20px;background:#eef2fb;border-radius:10px;"></div>
<svg class="b" style="left:1611px;top:803.5px;" width="12" height="12" viewBox="0 0 12 12"><path d="M1.5 1.5h9L7 6.3v4.2H5V6.3z" fill="none" stroke="#333" stroke-width="1.2" stroke-linejoin="round"/></svg>
<span class="t" style="left:1629px;top:804px;font-size:12px;color:#333;letter-spacing:0.367px;">Filter</span>
<span class="t" style="left:1764px;top:804px;font-size:10.5px;color:#333;font-weight:700;letter-spacing:-0.555px;">:hov</span>
<span class="t" style="left:1793.5px;top:804px;font-size:10.5px;color:#333;font-weight:700;letter-spacing:0.329px;">.cls</span>
<svg class="b" style="left:1824px;top:802px;" width="16" height="16" viewBox="0 0 16 16"><path d="M7 2v10M2 7h10" stroke="#333" stroke-width="1.4"/><path d="M15.5 10.5v4h-4z" fill="#333"/></svg>
<svg class="b" style="left:1852px;top:801px;" width="14" height="17" viewBox="0 0 14 17"><path d="M1.5 1.5h11v6h-11zM5.5 1.5v3M8.5 1.5v2" fill="none" stroke="#333" stroke-width="1.4"/><path d="M1.5 5.5h11" stroke="#333" stroke-width="1.4"/><rect x="5.5" y="7.5" width="3" height="7" rx="1" fill="#333"/></svg>
<svg class="b" style="left:1879px;top:802px;" width="15" height="15" viewBox="0 0 15 15"><rect x="1" y="1" width="13" height="13" rx="1.5" fill="none" stroke="#333" stroke-width="1.4"/><path d="M9.8 1v13" stroke="#333" stroke-width="1.4"/><path d="M7.5 5 4.5 7.5 7.5 10z" fill="#333"/></svg>
<div class="b" style="left:1596px;top:822.5px;width:309px;height:1px;background:#d3e3fd;"></div>
<span class="t" style="left:1600.5px;top:829px;font-size:11px;font-family:'Liberation Mono',monospace;"><span style="color:#777">element.style </span><span style="color:#1f1f1f">{</span></span>
<span class="t" style="left:1600.5px;top:846px;font-size:11px;font-family:'Liberation Mono',monospace;"><span style="color:#1f1f1f">}</span></span>
<div class="b" style="left:1596px;top:861px;width:309px;height:1px;background:#d3e3fd;"></div>
<span class="t" style="left:1600.5px;top:868px;font-size:11px;font-family:'Liberation Mono',monospace;"><span style="color:#1f1f1f">body * {</span></span>
<span class="t u" style="left:1808.6px;top:870px;font-size:11px;font-family:'Liberation Mono',monospace;"><span style="color:#333">themes.scss:15</span></span>
<span class="t" style="left:1617.5px;top:885px;font-size:11px;font-family:'Liberation Mono',monospace;"><span style="color:#dc362e">outline</span><span style="color:#1f1f1f">:</span></span>
<svg class="b" style="left:1676px;top:885px;" width="8" height="9" viewBox="0 0 8 9"><path d="M1.5 .5v8L7.5 4.5z" fill="#333"/></svg>
<span class="t" style="left:1687px;top:885px;font-size:11px;font-family:'Liberation Mono',monospace;"><span style="color:#1f1f1f">none;</span></span>
<span class="t" style="left:1600.5px;top:900px;font-size:11px;font-family:'Liberation Mono',monospace;"><span style="color:#1f1f1f">}</span></span>
<div class="b" style="left:1596px;top:914.5px;width:309px;height:1px;background:#d3e3fd;"></div>
<span class="t" style="left:1600.5px;top:922px;font-size:11px;font-family:'Liberation Mono',monospace;"><span style="color:#1f1f1f">*</span><span style="color:#777">, </span><span style="color:#777">*::before</span><span style="color:#777">, </span><span style="color:#777">*::after</span><span style="color:#1f1f1f"> {</span></span>
<span class="t u" style="left:1802px;top:924px;font-size:11px;font-family:'Liberation Mono',monospace;"><span style="color:#333">_reboot.scss:16</span></span>
<span class="t" style="left:1617.5px;top:939px;font-size:11px;font-family:'Liberation Mono',monospace;"><span style="color:#dc362e">box-sizing</span><span style="color:#1f1f1f">: border-box;</span></span>
<span class="t" style="left:1600.5px;top:954px;font-size:11px;font-family:'Liberation Mono',monospace;"><span style="color:#1f1f1f">}</span></span>
<div class="b" style="left:1596px;top:969px;width:309px;height:1px;background:#d3e3fd;"></div>
<span class="t" style="left:1600.5px;top:976px;font-size:11px;font-family:'Liberation Mono',monospace;font-style:italic;"><span style="color:#1f1f1f">div {</span></span>
<span class="t" style="left:1762.4px;top:978px;font-size:11px;font-family:'Liberation Mono',monospace;font-style:italic;"><span style="color:#8a8a8a">user agent stylesheet</span></span>
<span class="t" style="left:1617.5px;top:993px;font-size:11px;font-family:'Liberation Mono',monospace;font-style:italic;"><span style="color:#dc362e">display</span><span style="color:#1f1f1f">: block;</span></span>
<span class="t" style="left:1617.5px;top:1008px;font-size:11px;font-family:'Liberation Mono',monospace;font-style:italic;"><span style="color:#dc362e">unicode-bidi</span><span style="color:#1f1f1f">: isolate;</span></span>
<span class="t" style="left:1600.5px;top:1023px;font-size:11px;font-family:'Liberation Mono',monospace;font-style:italic;"><span style="color:#1f1f1f">}</span></span>
<div class="b" style="left:1596px;top:1038px;width:309px;height:24.5px;background:#eef2fb;"></div>
<div class="b" style="left:1596px;top:1038px;width:309px;height:1px;background:#d3e3fd;"></div>
<div class="b" style="left:1596px;top:1062px;width:309px;height:1px;background:#d3e3fd;"></div>
<span class="t" style="left:1601px;top:1044px;font-size:12px;color:#1f1f1f;letter-spacing:0.382px;">Inherited from</span>
<span class="t" style="left:1685px;top:1046px;font-size:11.5px;color:#dc362e;letter-spacing:0.354px;">body</span>
<span class="t" style="left:1600.5px;top:1069px;font-size:11px;font-family:'Liberation Mono',monospace;"><span style="color:#1f1f1f">body {</span></span>
<span class="t" style="left:1802px;top:1070px;font-size:11px;font-family:'Liberation Mono',monospace;"><span style="color:#333">_reboot.scss:49</span></span>
<div class="b" style="left:1905px;top:796px;width:15px;height:284px;background:#f1f1f1;"></div>
<svg class="b" style="left:1905px;top:797px;" width="15" height="15" viewBox="0 0 15 15"><path d="M3.8 10.3 7.5 5.7l3.7 4.6z" fill="#a3a3a3"/></svg>
<div class="b" style="left:1907px;top:811px;width:11px;height:29.5px;background:#c1c1c1;"></div>
<svg class="b" style="left:1905px;top:1064px;" width="15" height="15" viewBox="0 0 15 15"><path d="M3.8 4.7 7.5 9.3l3.7-4.6z" fill="#505050"/></svg>
</div>
</body>
</html>
